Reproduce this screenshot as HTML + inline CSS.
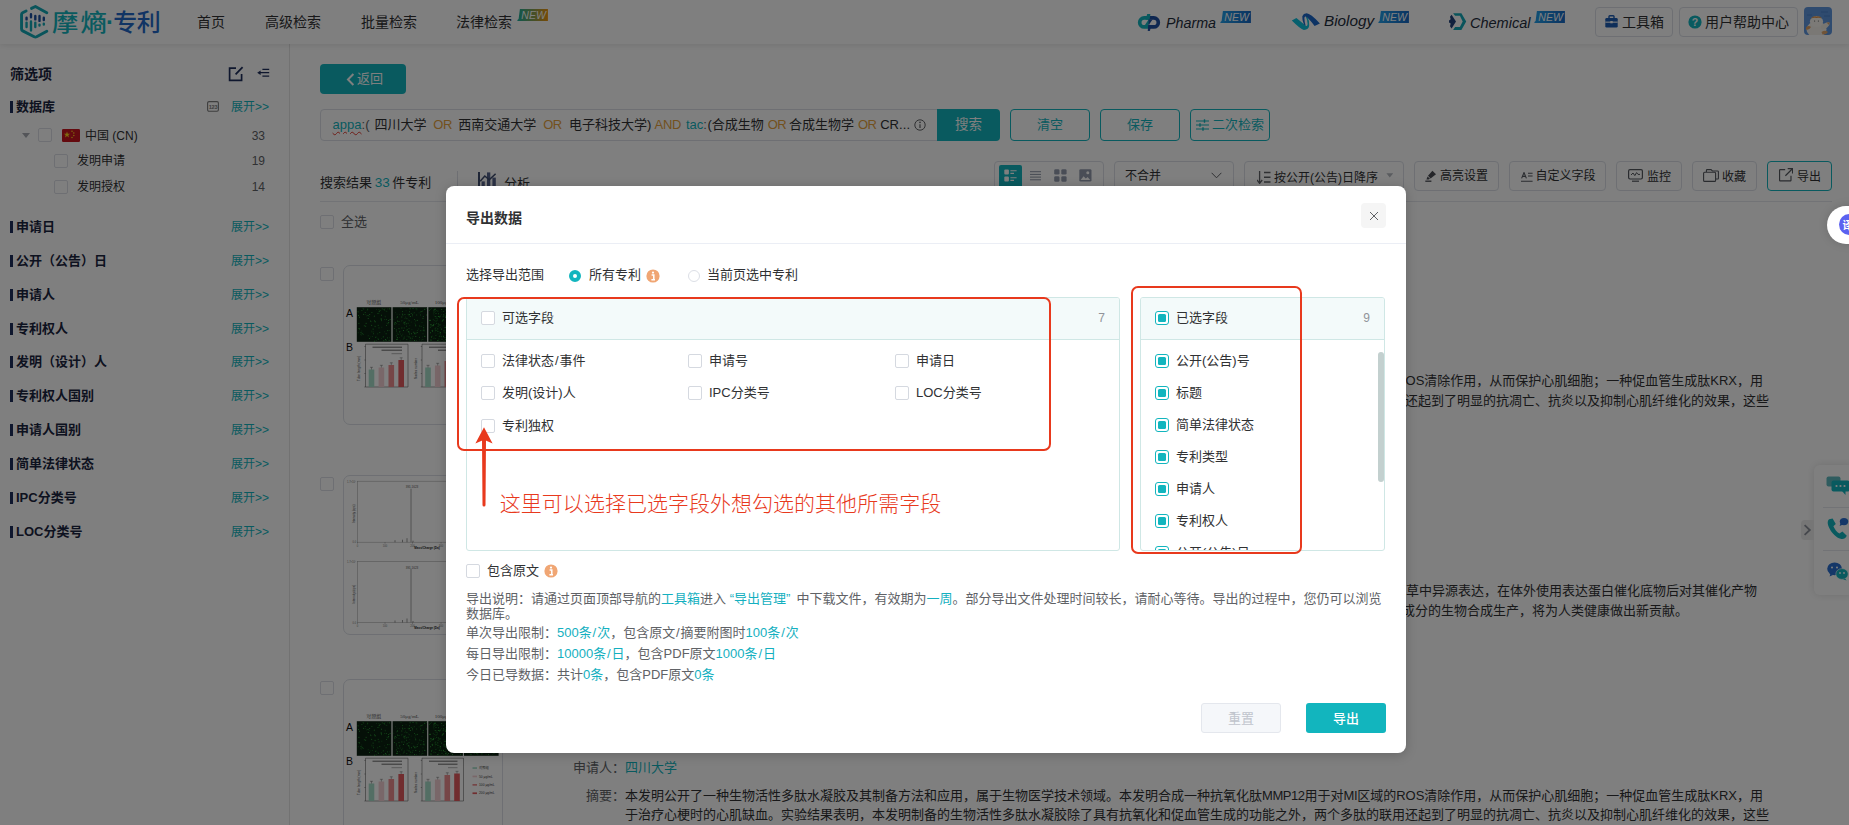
<!DOCTYPE html>
<html lang="zh-CN">
<head>
<meta charset="utf-8">
<title>摩熵·专利 - 导出数据</title>
<style>
*{box-sizing:border-box;margin:0;padding:0}
html,body{width:1849px;height:825px;overflow:hidden;background:#fff}
body{font-family:"Liberation Sans","Noto Sans CJK SC",sans-serif;font-size:13px;color:#303133;position:relative}
.abs{position:absolute;white-space:nowrap}
#page{position:absolute;left:0;top:0;width:1849px;height:825px;overflow:hidden;background:#fff}
/* header */
#hdr{position:absolute;left:0;top:0;width:1849px;height:44px;background:#fff;box-shadow:0 1px 6px rgba(0,0,0,.11);z-index:2}
.nav{position:absolute;top:0;height:44px;line-height:44px;font-size:14px;color:#303133;white-space:nowrap}
.new{position:absolute;height:12px;width:30.5px;margin-left:-.6px;font-size:10.6px;line-height:12.6px;color:#fff;font-style:italic;text-align:center;padding-left:2px;clip-path:polygon(2.5px 0,100% 0,100% 100%,0 100%,0 92%,1.2px 84%)}
.new span{display:inline-block}
.brand{position:absolute;top:1px;height:44px;line-height:44px;font-size:15.5px;font-style:italic;color:#1f2d3d;white-space:nowrap}
.hbtn{position:absolute;top:7px;height:30px;border:1px solid #dcdfe6;border-radius:4px;background:#fff;font-size:14px;line-height:28px;color:#303133;white-space:nowrap}
/* sidebar */
#side{position:absolute;left:0;top:44px;width:290px;height:781px;border-right:1px solid #e4e4e4;background:#fff}
.ft{position:absolute;left:10px;font-size:13px;font-weight:bold;color:#1b2540;height:20px;line-height:20px;white-space:nowrap}
.ft i{position:absolute;left:0;top:4px;width:3px;height:12px;background:#1f2f5c}
.ft span{padding-left:6px}
.ex{position:absolute;left:231px;font-size:12px;color:#12b5be;height:20px;line-height:20px;white-space:nowrap}
.cb{position:absolute;width:14px;height:14px;border:1px solid #dcdfe6;border-radius:2px;background:#fff}
.tl{position:absolute;font-size:12px;color:#303133;height:20px;line-height:20px;white-space:nowrap}
.tn{position:absolute;font-size:12px;color:#606266;height:20px;line-height:20px;width:30px;text-align:right;left:235px}

/* main */
.tbtn{position:absolute;top:161px;height:30px;border:1px solid #dcdfe6;border-radius:4px;background:#fff;font-size:12px;line-height:29px;color:#303133;white-space:nowrap}
.tbtn span{position:absolute;top:0}
.obtn{position:absolute;top:109px;height:32px;width:80px;border:1px solid #12b5be;border-radius:4px;background:#fff;font-size:13px;line-height:30px;color:#12b5be;text-align:center;white-space:nowrap}
.thumb{position:absolute;left:343px;width:160px;height:160px;border:1px solid #dcdfe6;border-radius:7px;background:#fff;overflow:hidden}
.al{position:absolute;left:625px;font-size:13px;line-height:20px;height:20px;color:#303133;white-space:nowrap}
.al u{text-decoration:none;letter-spacing:-.45px}
.lb{position:absolute;font-size:13px;line-height:20px;height:20px;color:#606266;white-space:nowrap}

/* modal */
#ov{position:absolute;left:0;top:0;width:1849px;height:825px;background:rgba(0,0,0,.5);z-index:5}
#md{position:absolute;left:446px;top:186px;width:960px;height:567px;background:#fff;border-radius:8px;z-index:6;box-shadow:0 2px 12px rgba(0,0,0,.2)}
#md .cb{border-color:#d5d9e0}
.mt{position:absolute;font-size:13px;line-height:20px;height:20px;color:#303133;white-space:nowrap}
.pn{position:absolute;top:111px;height:254px;border:1px solid #cfe7e5;border-radius:3px;background:#fff;overflow:hidden}
.pn .hd{position:absolute;left:0;top:0;right:0;height:42px;background:#f3fafa;border-bottom:1px solid #cfe7e5}
.ck{position:absolute;width:14px;height:14px;border:1.5px solid #12b5be;border-radius:3px;background:#fff}
.ck:after{content:"";position:absolute;left:1.5px;top:1.5px;width:8px;height:8px;border-radius:1.5px;background:#12b5be}
.nt{position:absolute;left:20px;font-size:13px;line-height:15px;color:#606266;white-space:nowrap}
.nt b{font-weight:normal;color:#14b0c0}
.sl{margin:0 .9px}
</style>
</head>
<body>
<div id="page">
<div id="hdr">
  <svg class="abs" style="left:19px;top:4px" width="30" height="36" viewBox="0 0 30 36">
    <path d="M12.5 4.4 L16.4 2.5 L27.8 8.7" fill="none" stroke="#12a9b6" stroke-width="2.9" stroke-linecap="round" stroke-linejoin="round"/>
    <path d="M7.1 7 L3.6 8.7 Q2.55 9.3 2.55 10.6 V25 Q2.55 26.3 3.7 26.9 L15.2 32.8 Q16.4 33.4 17.6 32.8 L27.8 27.2" fill="none" stroke="#12a9b6" stroke-width="2.9" stroke-linecap="round" stroke-linejoin="round"/>
    <g stroke-linecap="round" stroke-width="2.4">
      <path d="M7.55 13.8 V15.4 M12 10.2 V13.2 M16.3 11.9 V15.4 M20.5 11.9 V16.9 M24.8 13.8 V16" stroke="#1c4fa0"/>
      <path d="M7.55 18.6 V23 M12 17.4 V26.4 M16.3 18.6 V23 M20.5 20.6 V21.6 M24.8 19.8 V20.6" stroke="#12a9b6"/>
    </g>
  </svg>
  <div class="abs" style="left:52px;top:0;height:44px;line-height:45px;font-size:24px;font-weight:500;letter-spacing:1.8px;color:#12b5be;transform:scaleX(1.1);transform-origin:0 0">摩熵</div>
  <div class="abs" style="left:106px;top:0;height:44px;line-height:43px;font-size:24px;font-weight:900;color:#12b5be;width:8px;text-align:center;overflow:visible"><span style="display:inline-block;margin-left:-8px;width:24px">·</span></div>
  <div class="abs" style="left:113.2px;top:0;height:44px;line-height:45px;font-size:24px;font-weight:500;letter-spacing:-.5px;color:#2268c8">专利</div>
  <div class="nav" style="left:197px">首页</div>
  <div class="nav" style="left:265px">高级检索</div>
  <div class="nav" style="left:361px">批量检索</div>
  <div class="nav" style="left:456px">法律检索</div>
  <div class="new" style="left:518px;top:9px;background:linear-gradient(90deg,#16ae9e,#f0940c)"><span>NEW</span></div>

  <svg class="abs" style="left:1137px;top:13px" width="24" height="19" viewBox="0 0 24 19">
    <path d="M12.6 4.9 H7.2 A4.5 4.5 0 0 0 7.2 13.9 H11.4" fill="none" stroke="#12b5be" stroke-width="3.7"/>
    <path d="M11.4 4.9 H16.8 A4.5 4.5 0 0 1 16.8 13.9 H11.8" fill="none" stroke="#1d4fa3" stroke-width="3.7"/>
    <path d="M10.2 1 H13.4 L12.6 6.8 H8.6 Z" fill="#12b5be"/>
    <path d="M7.6 12.4 L10.8 12.4 L13.2 9.4 L11.6 6.6 Z" fill="#12b5be"/>
    <path d="M11.6 6.6 L15.6 6.6 L12 11.6 L13.6 12.2 L12.8 17.8 H10.8 L11.6 11.8 Z" fill="#1d4fa3"/>
    <path d="M11.2 12 H14.2 L13 17.8 H10.8 Z" fill="#1d4fa3"/>
  </svg>
  <div class="brand" style="left:1166px;font-size:15.2px;transform:scaleX(.94);transform-origin:0 50%">Pharma</div>
  <div class="new" style="left:1221px;top:11px;background:linear-gradient(90deg,#22a0ea,#1668c4)"><span>NEW</span></div>

  <svg class="abs" style="left:1291px;top:12px" width="30" height="19" viewBox="0 0 30 19">
    <path d="M0.8 8.6 L5.4 5.9 L14.8 13.8 Q16.4 14.8 16.6 12 Q16.6 8 15 5.2 L16.2 4.6 Q18.6 9 18.2 13.6 Q17.6 18 12.8 17.9 Q9.5 17.4 0.8 8.6 Z" fill="#0cc0dc"/>
    <path d="M11.3 4.2 Q12.4 1.5 15.6 1.3 Q19.4 1.4 28.9 11.4 L23.6 13.9 Q17.4 5.6 14.6 4.4 Q13.4 4.2 13.4 6.2 Q13.5 10 14.6 13.6 L13 12.8 Q11 8 11.3 4.2 Z" fill="#1a66c8"/>
  </svg>
  <div class="brand" style="left:1324px;top:-1px;font-size:15.3px">Biology</div>
  <div class="new" style="left:1379px;top:11px;background:linear-gradient(90deg,#22a0ea,#1668c4)"><span>NEW</span></div>

  <svg class="abs" style="left:1448px;top:13px" width="19" height="18" viewBox="0 0 19 18">
    <path d="M5.1 .2 H13.4 L18.2 8.5 L13.4 17 H5.1 L7.1 14.1 H11.9 L14.7 8.5 L11.9 2.8 H7.1 Z" fill="#12a9b8"/>
    <path d="M3.6 1.7 L8 8.5 L3.6 15.5 L2 13.3 L2.7 10.6 L1 9.5 V7.4 L2.7 6.3 L2 3.7 Z" fill="#22427c"/>
  </svg>
  <div class="brand" style="left:1469.5px;font-size:15.2px;transform:scaleX(.955);transform-origin:0 50%">Chemical</div>
  <div class="new" style="left:1535px;top:11px;background:linear-gradient(90deg,#22a0ea,#1668c4)"><span>NEW</span></div>

  <div class="hbtn" style="left:1595px;width:78px">
    <svg class="abs" style="left:9px;top:7px" width="13" height="13" viewBox="0 0 13 13"><path d="M4 3 V1.6 A.8.8 0 0 1 4.8.8 H8.2 A.8.8 0 0 1 9 1.6 V3" fill="none" stroke="#1d5cb3" stroke-width="1.4"/><rect x=".3" y="3" width="12.4" height="9.4" rx="1.2" fill="#1d5cb3"/><rect x=".3" y="6.6" width="12.4" height="1.1" fill="#fff"/><rect x="5.3" y="6" width="2.4" height="2.3" fill="#fff"/></svg>
    <span class="abs" style="left:26px;top:0">工具箱</span>
  </div>
  <div class="hbtn" style="left:1679px;width:119px">
    <svg class="abs" style="left:8px;top:7px" width="14" height="14" viewBox="0 0 14 14"><circle cx="7" cy="7" r="6.6" fill="#12b5be"/><text x="7" y="10.8" font-size="10.5" font-weight="bold" fill="#fff" text-anchor="middle" font-family="Liberation Sans, sans-serif">?</text></svg>
    <span class="abs" style="left:25px;top:0">用户帮助中心</span>
  </div>
  <svg class="abs" style="left:1804px;top:7px" width="28" height="28" viewBox="0 0 28 28">
    <defs><clipPath id="avc"><rect width="28" height="28" rx="4"/></clipPath></defs>
    <g clip-path="url(#avc)"><rect width="28" height="28" fill="#5f97df"/>
    <path d="M3 8 H8 M17 5 H24 M20 9 H26" stroke="#4b82cc" stroke-width="1"/>
    <ellipse cx="12.5" cy="22.5" rx="10" ry="8" fill="#f5f1ea"/>
    <ellipse cx="12.5" cy="14.5" rx="6.6" ry="5.4" fill="#f8f5ef"/>
    <path d="M7 11.5 Q9 8.6 12.5 9.4 Q16 8.6 18 11.5 Q15 10.4 12.5 11 Q10 10.4 7 11.5 Z" fill="#e0944a"/>
    <path d="M17 19 Q22 14.5 25.5 15.5 Q26.5 18 22 21.5 Q19 23 17 22 Z" fill="#f1ece3"/>
    <path d="M22.5 15.4 L25.6 15.4 L25 18 Z" fill="#e0a062"/>
    <path d="M2 20.5 Q4.5 18 7 20 Q5 23.5 2 22.5 Z" fill="#e0a062"/>
    <path d="M17.5 25 Q21 22.5 24 25 Q22 28 18.5 27.5 Z" fill="#e3a96e"/>
    <circle cx="10.6" cy="14" r=".6" fill="#555"/><circle cx="14.4" cy="14" r=".6" fill="#555"/></g>
  </svg>
</div>
<div id="side">
  <div class="abs" style="left:10px;top:20px;height:20px;line-height:20px;font-size:14px;font-weight:bold;color:#1b2540">筛选项</div>
  <svg class="abs" style="left:228.2px;top:21.8px" width="17" height="16" viewBox="0 0 17 16"><path d="M8 2.2 H1.6 V14.4 H13.6 V8" fill="none" stroke="#1f2f5c" stroke-width="1.7"/><path d="M7.6 8.4 L14.6 1.2" stroke="#1f2f5c" stroke-width="1.8"/></svg>
  <svg class="abs" style="left:257px;top:24px" width="13" height="10" viewBox="0 0 13 10"><path d="M5.4 1.3 H12.2 M2.4 4.7 H12.2 M5.4 8.1 H12.2" stroke="#1f2f5c" stroke-width="1.25"/><path d="M0.2 4.7 L3.6 2.4 V7 Z" fill="#1f2f5c"/></svg>

  <div class="ft" style="top:52.6px"><i></i><span>数据库</span></div>
  <svg class="abs" style="left:207px;top:57px" width="12" height="11" viewBox="0 0 12 11"><rect x=".6" y=".6" width="10.8" height="9.6" rx="1.4" fill="none" stroke="#7c7c7c" stroke-width="1.1"/><text x="6" y="7.6" font-size="5.6" font-weight="bold" fill="#7c7c7c" text-anchor="middle" font-family="Liberation Sans, sans-serif" letter-spacing="-.2">123</text></svg>
  <div class="ex" style="top:53px">展开&gt;&gt;</div>

  <svg class="abs" style="left:21px;top:88px" width="10" height="7" viewBox="0 0 10 7"><path d="M1 1 H9 L5 6 Z" fill="#a8abb2"/></svg>
  <div class="cb" style="left:38px;top:84px"></div>
  <svg class="abs" style="left:62px;top:85px" width="18" height="13" viewBox="0 0 18 13"><rect width="18" height="13" rx="1.3" fill="#c8141f"/><path d="M5 2.4 L5.8 4.7 L8.2 4.7 L6.3 6.1 L7 8.4 L5 7 L3 8.4 L3.7 6.1 L1.8 4.7 L4.2 4.7 Z" fill="#ffd21a"/><circle cx="10" cy="2.2" r=".75" fill="#ffd21a"/><circle cx="11.8" cy="4" r=".75" fill="#ffd21a"/><circle cx="11.8" cy="6.6" r=".75" fill="#ffd21a"/><circle cx="10" cy="8.6" r=".75" fill="#ffd21a"/></svg>
  <div class="tl" style="left:85px;top:82px">中国 (CN)</div>
  <div class="tn" style="top:82px">33</div>

  <div class="cb" style="left:54px;top:110px"></div>
  <div class="tl" style="left:77px;top:107px">发明申请</div>
  <div class="tn" style="top:107px">19</div>
  <div class="cb" style="left:54px;top:136px"></div>
  <div class="tl" style="left:77px;top:133px">发明授权</div>
  <div class="tn" style="top:133px">14</div>
  <div class="ft" style="top:173px"><i></i><span>申请日</span></div><div class="ex" style="top:173px">展开&gt;&gt;</div>
  <div class="ft" style="top:207px"><i></i><span>公开（公告）日</span></div><div class="ex" style="top:207px">展开&gt;&gt;</div>
  <div class="ft" style="top:241px"><i></i><span>申请人</span></div><div class="ex" style="top:241px">展开&gt;&gt;</div>
  <div class="ft" style="top:275px"><i></i><span>专利权人</span></div><div class="ex" style="top:275px">展开&gt;&gt;</div>
  <div class="ft" style="top:308px"><i></i><span>发明（设计）人</span></div><div class="ex" style="top:308px">展开&gt;&gt;</div>
  <div class="ft" style="top:342px"><i></i><span>专利权人国别</span></div><div class="ex" style="top:342px">展开&gt;&gt;</div>
  <div class="ft" style="top:376px"><i></i><span>申请人国别</span></div><div class="ex" style="top:376px">展开&gt;&gt;</div>
  <div class="ft" style="top:410px"><i></i><span>简单法律状态</span></div><div class="ex" style="top:410px">展开&gt;&gt;</div>
  <div class="ft" style="top:444px"><i></i><span>IPC分类号</span></div><div class="ex" style="top:444px">展开&gt;&gt;</div>
  <div class="ft" style="top:478px"><i></i><span>LOC分类号</span></div><div class="ex" style="top:478px">展开&gt;&gt;</div>
</div>
<div id="main">
  <div class="abs" style="left:320px;top:64px;width:86px;height:30px;border-radius:4px;background:#12b5be;color:#fff;font-size:13px;line-height:30px">
    <svg class="abs" style="left:25.5px;top:8.5px" width="9" height="13" viewBox="0 0 9 13"><path d="M7.4 1 L2 6.5 L7.4 12" fill="none" stroke="#fff" stroke-width="2"/></svg>
    <span class="abs" style="left:37px;top:0">返回</span>
  </div>
  <div class="abs" id="sinput" style="left:320px;top:109px;width:618px;height:32px;border:1px solid #dcdfe6;border-radius:4px 0 0 4px;background:#fff;font-size:13px;line-height:30px;color:#303133"><span class="sg" style="position:absolute;top:0;left:11.6px;white-space:nowrap"><span style="color:#12b5be;text-decoration:underline wavy #e03c31;text-decoration-thickness:1px;text-underline-offset:2px">appa</span><span style="color:#606266">:(</span></span><span class="sg" style="position:absolute;top:0;left:53.4px;white-space:nowrap">四川大学</span><span class="sg" style="position:absolute;top:0;left:112.3px;white-space:nowrap"><span style="color:#e6a23c;letter-spacing:-.5px">OR</span></span><span class="sg" style="position:absolute;top:0;left:137.2px;white-space:nowrap">西南交通大学</span><span class="sg" style="position:absolute;top:0;left:222.2px;white-space:nowrap"><span style="color:#e6a23c;letter-spacing:-.5px">OR</span></span><span class="sg" style="position:absolute;top:0;left:247.9px;white-space:nowrap">电子科技大学)</span><span class="sg" style="position:absolute;top:0;left:333.6px;white-space:nowrap"><span style="color:#e6a23c;letter-spacing:-.3px">AND</span></span><span class="sg" style="position:absolute;top:0;left:365.0px;white-space:nowrap"><span style="color:#12b5be">tac</span><span style="color:#606266">:</span></span><span class="sg" style="position:absolute;top:0;left:386.4px;white-space:nowrap">(合成生物</span><span class="sg" style="position:absolute;top:0;left:446.7px;white-space:nowrap"><span style="color:#e6a23c;letter-spacing:-.5px">OR</span></span><span class="sg" style="position:absolute;top:0;left:468.1px;white-space:nowrap">合成生物学</span><span class="sg" style="position:absolute;top:0;left:537.0px;white-space:nowrap"><span style="color:#e6a23c;letter-spacing:-.5px">OR</span></span><span class="sg" style="position:absolute;top:0;left:559.2px;white-space:nowrap">CR<span style="letter-spacing:.2px;font-family:'Liberation Sans',sans-serif">...</span></span></div>
  <svg class="abs" style="left:914px;top:119px" width="12" height="12" viewBox="0 0 12 12"><circle cx="6" cy="6" r="5.2" fill="none" stroke="#606266" stroke-width="1"/><path d="M6 5.2 V9" stroke="#606266" stroke-width="1.2"/><circle cx="6" cy="3.4" r=".8" fill="#606266"/></svg>
  <div class="abs" style="left:937px;top:109px;width:63px;height:32px;border-radius:0 4px 4px 0;background:#12b5be;color:#fff;font-size:13.5px;line-height:32px;text-align:center">搜索</div>
  <div class="obtn" style="left:1010px">清空</div>
  <div class="obtn" style="left:1100px">保存</div>
  <div class="obtn" style="left:1190px;text-align:left">
    <svg class="abs" style="left:5px;top:9px" width="14" height="12" viewBox="0 0 14 12"><path d="M0 2 H13 M0 6 H13 M0 10 H13" stroke="#12b5be" stroke-width="1.1"/><path d="M8.5 .2 V3.8 M4 4.2 V7.8 M7 8.2 V11.8" stroke="#12b5be" stroke-width="1.4"/></svg>
    <span class="abs" style="left:21px;top:0">二次检索</span>
  </div>

  <div class="abs" style="left:320px;top:173px;height:20px;line-height:20px;font-size:13px;color:#303133"><span style="word-spacing:-1px">搜索结果 <span style="color:#12b5be;font-size:13.5px">33</span> 件专利</span></div>
  <div class="abs" style="left:457px;top:171px;width:1px;height:24px;background:#dcdfe6"></div>
  <svg class="abs" style="left:478px;top:172px" width="18" height="18" viewBox="0 0 18 18"><rect x="0" y="0" width="2" height="18" fill="#3f4d6e"/><rect x="3.6" y="9.4" width="3.2" height="8.6" fill="#55638a"/><rect x="9" y="0.4" width="3.3" height="17.6" fill="#55638a"/><rect x="14.4" y="5.6" width="3.4" height="12.4" fill="#55638a"/><path d="M2.2 9.2 L6.8 4 L11.2 7.8 L17.6 1.8" fill="none" stroke="#3f4d6e" stroke-width="1.5"/></svg>
  <div class="abs" style="left:504px;top:174px;height:20px;line-height:20px;font-size:13px;color:#303133">分析</div>
  <div class="abs" style="left:320px;top:201px;width:1512px;height:1px;background:#e4e7ed"></div>

  <div class="abs" style="left:994px;top:161px;width:110px;height:30px;border:1px solid #dcdfe6;border-radius:4px;background:#fff"></div>
  <div class="abs" style="left:999px;top:165px;width:23px;height:23px;background:#12b5be;border-radius:2px"></div>
  <svg class="abs" style="left:1004px;top:169px" width="14" height="14" viewBox="0 0 14 14"><rect x=".3" y=".4" width="4.6" height="5" rx="1" fill="#fff"/><rect x=".3" y="7.4" width="4.6" height="5" rx="1" fill="#fff"/><path d="M6.4 1.8 H12.6 M6.4 4.4 H10 M6.4 8.8 H12.6 M6.4 11.4 H10" stroke="#fff" stroke-width="1.1"/></svg>
  <svg class="abs" style="left:1030px;top:171px" width="11" height="10" viewBox="0 0 11 10"><path d="M0 .7 H11 M0 3.4 H11 M0 6.1 H11 M0 8.8 H11" stroke="#8d95a5" stroke-width="1"/></svg>
  <svg class="abs" style="left:1054px;top:169px" width="13" height="13" viewBox="0 0 13 13"><rect x=".2" y=".2" width="5.3" height="5.4" rx="1.3" fill="#929bad"/><rect x="7.3" y=".2" width="5.3" height="5.4" rx="1.3" fill="#929bad"/><rect x=".2" y="7.3" width="5.3" height="5.4" rx="1.3" fill="#929bad"/><rect x="7.3" y="7.3" width="5.3" height="5.4" rx="1.3" fill="#929bad"/></svg>
  <svg class="abs" style="left:1079px;top:169px" width="13" height="13" viewBox="0 0 13 13"><rect x=".3" y=".2" width="12.2" height="12.4" rx="1.4" fill="#929bad"/><path d="M1.6 11 L4.6 7.2 L6.8 9.6 L8.6 8 L11.2 11 Z" fill="#fff"/><circle cx="8.8" cy="3.8" r="1.5" fill="#fff"/></svg>

  <div class="tbtn" style="left:1114px;width:120px"><span style="left:10px">不合并</span>
    <svg class="abs" style="left:96px;top:10px" width="11" height="7" viewBox="0 0 11 7"><path d="M.6 .8 L5.5 5.8 L10.4 .8" fill="none" stroke="#606266" stroke-width="1"/></svg></div>
  <div class="tbtn" style="left:1244px;width:160px">
    <svg class="abs" style="left:12px;top:8.5px" width="14" height="13" viewBox="0 0 14 13"><path d="M2.6 0 V12 M0 9 L2.6 12.4 L5.2 9" fill="none" stroke="#606266" stroke-width="1.3"/><path d="M7 1.5 H13.5 M7 6.2 H13.5 M7 11 H13.5" stroke="#606266" stroke-width="1.6"/></svg>
    <span style="left:29px;top:2px">按公开(公告)日降序</span>
    <svg class="abs" style="left:141px;top:10.6px" width="8" height="5" viewBox="0 0 8 5"><path d="M.4 .2 H7.2 L3.8 4.4 Z" fill="#b4b8bf"/></svg></div>
  <div class="tbtn" style="left:1414px;width:85px">
    <svg class="abs" style="left:10px;top:8px" width="12" height="12" viewBox="0 0 12 12"><path d="M5.6 8.4 L3 5.8 L7.4 .8 L11 4.2 Z" fill="#4a4d55"/><path d="M2.6 6.4 L5 8.8 L3.6 9.6 H1.4 Z" fill="#4a4d55"/><path d="M.3 11.2 H6.4" stroke="#4a4d55" stroke-width="1.3"/></svg>
    <span style="left:25px">高亮设置</span></div>
  <div class="tbtn" style="left:1509px;width:97px">
    <svg class="abs" style="left:11px;top:9.6px" width="12" height="10" viewBox="0 0 12 10"><path d="M.6 6.4 L3 .6 L5.4 6.4 M1.5 4.4 H4.5" fill="none" stroke="#55585f" stroke-width="1.1"/><path d="M7 1.2 H11.6 M7 4 H11.6 M0 9.2 H11.6" stroke="#55585f" stroke-width="1.1"/></svg>
    <span style="left:25.5px">自定义字段</span></div>
  <div class="tbtn" style="left:1616px;width:66px">
    <svg class="abs" style="left:11px;top:7px" width="15" height="13" viewBox="0 0 15 13"><rect x=".6" y=".6" width="13.8" height="9.4" rx="1.4" fill="none" stroke="#55585f" stroke-width="1.2"/><path d="M3 6 L5 4 L6.8 6.6 L8.6 3.6 L10 5.4 H12" fill="none" stroke="#55585f" stroke-width="1"/><path d="M4 12.2 H11" stroke="#55585f" stroke-width="1.2"/></svg>
    <span style="left:30px;top:1px">监控</span></div>
  <div class="tbtn" style="left:1692px;width:65px">
    <svg class="abs" style="left:10px;top:7px" width="16" height="13" viewBox="0 0 16 13"><path d="M3.4 3 V1.4 A.8.8 0 0 1 4.2.6 H8 L9.4 2 H14.6 A.8.8 0 0 1 15.4 2.8 V9.2 A.8.8 0 0 1 14.6 10 H12.6" fill="none" stroke="#55585f" stroke-width="1.1"/><rect x=".6" y="3.2" width="12" height="9.2" rx="1" fill="none" stroke="#55585f" stroke-width="1.1"/></svg>
    <span style="left:29px;top:1px">收藏</span></div>
  <div class="tbtn" style="left:1767px;width:65px;border-color:#12b5be;border-width:1.5px">
    <svg class="abs" style="left:10.5px;top:6px" width="14.5" height="14.5" viewBox="0 0 15 15"><path d="M6.4 1.6 H1.4 A.8.8 0 0 0 .6 2.4 V12.6 A.8.8 0 0 0 1.4 13.4 H11.6 A.8.8 0 0 0 12.4 12.6 V8" fill="none" stroke="#55585f" stroke-width="1.2"/><path d="M6.6 8 L13.6 1 M9 .7 H14 V5.6" fill="none" stroke="#55585f" stroke-width="1.2"/></svg>
    <span style="left:29px;top:1px">导出</span></div>

  <div class="cb" style="left:320px;top:215px"></div>
  <div class="abs" style="left:341px;top:212px;height:20px;line-height:20px;font-size:13px;color:#606266">全选</div>

  <div class="cb" style="left:320px;top:267px"></div>
  <div class="thumb" style="top:265px"><svg width="158" height="158" viewBox="0 0 158 158" style="position:absolute;left:0;top:0"><text x="2" y="51" font-size="10.5" fill="#111" font-family="Liberation Sans, sans-serif">A</text><text x="2" y="84.8" font-size="10.5" fill="#111" font-family="Liberation Sans, sans-serif">B</text><rect x="12.8" y="41.2" width="34.6" height="34.6" fill="#0a2110"/><text x="29.8" y="38.4" font-size="5" fill="#555" text-anchor="middle" font-family="Liberation Serif, Noto Serif CJK SC, serif">对照组</text><rect x="21.3" y="59.8" width=".8" height=".8" fill="#3fd04a"/><rect x="43.6" y="57.4" width=".8" height=".8" fill="#2fae3a"/><rect x="33.4" y="71.8" width=".8" height=".8" fill="#1a5f22"/><rect x="22.0" y="49.5" width=".8" height=".8" fill="#1a5f22"/><rect x="31.3" y="59.9" width=".8" height=".8" fill="#1a5f22"/><rect x="34.5" y="46.8" width=".8" height=".8" fill="#1f7a2a"/><rect x="42.0" y="59.1" width=".8" height=".8" fill="#2fae3a"/><rect x="35.6" y="43.9" width=".8" height=".8" fill="#2fae3a"/><rect x="23.3" y="42.8" width=".8" height=".8" fill="#3fd04a"/><rect x="29.0" y="65.5" width=".8" height=".8" fill="#1a5f22"/><rect x="37.0" y="72.2" width=".8" height=".8" fill="#1a5f22"/><rect x="37.4" y="60.8" width=".8" height=".8" fill="#1f7a2a"/><rect x="42.4" y="45.0" width=".8" height=".8" fill="#1f7a2a"/><rect x="29.7" y="50.3" width=".8" height=".8" fill="#1a5f22"/><rect x="39.1" y="70.0" width=".8" height=".8" fill="#1a5f22"/><rect x="30.1" y="54.5" width=".8" height=".8" fill="#3fd04a"/><rect x="31.0" y="55.3" width=".8" height=".8" fill="#1f7a2a"/><rect x="43.2" y="64.3" width=".8" height=".8" fill="#2fae3a"/><rect x="41.7" y="74.5" width=".8" height=".8" fill="#1f7a2a"/><rect x="36.5" y="52.6" width=".8" height=".8" fill="#2fae3a"/><rect x="37.0" y="48.8" width=".8" height=".8" fill="#3fd04a"/><rect x="22.8" y="43.9" width=".8" height=".8" fill="#1a5f22"/><rect x="16.3" y="68.2" width=".8" height=".8" fill="#1a5f22"/><rect x="43.0" y="42.5" width=".8" height=".8" fill="#1a5f22"/><rect x="38.8" y="70.6" width=".8" height=".8" fill="#2fae3a"/><rect x="33.4" y="66.9" width=".8" height=".8" fill="#1a5f22"/><rect x="37.1" y="52.7" width=".8" height=".8" fill="#3fd04a"/><rect x="30.1" y="74.8" width=".8" height=".8" fill="#3fd04a"/><rect x="13.6" y="45.4" width=".8" height=".8" fill="#2fae3a"/><rect x="44.7" y="73.9" width=".8" height=".8" fill="#3fd04a"/><rect x="33.5" y="47.0" width=".8" height=".8" fill="#2fae3a"/><rect x="45.7" y="53.0" width=".8" height=".8" fill="#3fd04a"/><rect x="45.0" y="71.4" width=".8" height=".8" fill="#1a5f22"/><rect x="25.8" y="70.5" width=".8" height=".8" fill="#1a5f22"/><rect x="34.6" y="61.5" width=".8" height=".8" fill="#2fae3a"/><rect x="33.9" y="72.8" width=".8" height=".8" fill="#3fd04a"/><rect x="27.6" y="65.6" width=".8" height=".8" fill="#1f7a2a"/><rect x="44.3" y="56.2" width=".8" height=".8" fill="#3fd04a"/><rect x="30.6" y="59.9" width=".8" height=".8" fill="#2fae3a"/><rect x="39.4" y="74.4" width=".8" height=".8" fill="#3fd04a"/><rect x="14.1" y="62.1" width=".8" height=".8" fill="#1f7a2a"/><rect x="15.4" y="62.5" width=".8" height=".8" fill="#1a5f22"/><rect x="25.0" y="72.1" width=".8" height=".8" fill="#3fd04a"/><rect x="37.8" y="42.5" width=".8" height=".8" fill="#2fae3a"/><rect x="44.9" y="42.5" width=".8" height=".8" fill="#3fd04a"/><rect x="21.7" y="56.9" width=".8" height=".8" fill="#3fd04a"/><rect x="19.3" y="47.9" width=".8" height=".8" fill="#3fd04a"/><rect x="41.2" y="50.5" width=".8" height=".8" fill="#1a5f22"/><rect x="16.9" y="68.6" width=".8" height=".8" fill="#1f7a2a"/><rect x="23.6" y="49.1" width=".8" height=".8" fill="#3fd04a"/><rect x="21.3" y="48.0" width=".8" height=".8" fill="#1a5f22"/><rect x="34.8" y="45.0" width=".8" height=".8" fill="#3fd04a"/><rect x="44.7" y="64.1" width=".8" height=".8" fill="#1f7a2a"/><rect x="27.9" y="70.0" width=".8" height=".8" fill="#1f7a2a"/><rect x="16.0" y="66.3" width=".8" height=".8" fill="#1f7a2a"/><rect x="42.6" y="56.7" width=".8" height=".8" fill="#1f7a2a"/><rect x="39.4" y="42.9" width=".8" height=".8" fill="#1f7a2a"/><rect x="23.8" y="69.4" width=".8" height=".8" fill="#1f7a2a"/><rect x="41.9" y="53.0" width=".8" height=".8" fill="#2fae3a"/><rect x="40.0" y="53.2" width=".8" height=".8" fill="#1f7a2a"/><rect x="27.3" y="58.9" width=".8" height=".8" fill="#3fd04a"/><rect x="28.7" y="62.7" width=".8" height=".8" fill="#3fd04a"/><rect x="27.3" y="55.3" width=".8" height=".8" fill="#1a5f22"/><rect x="18.5" y="42.0" width=".8" height=".8" fill="#1a5f22"/><rect x="31.8" y="74.3" width=".8" height=".8" fill="#1f7a2a"/><rect x="14.5" y="56.9" width=".8" height=".8" fill="#3fd04a"/><rect x="31.3" y="71.2" width=".8" height=".8" fill="#2fae3a"/><rect x="41.7" y="73.8" width=".8" height=".8" fill="#2fae3a"/><rect x="40.1" y="43.3" width=".8" height=".8" fill="#1f7a2a"/><rect x="43.0" y="71.5" width=".8" height=".8" fill="#2fae3a"/><rect x="13.8" y="66.4" width=".8" height=".8" fill="#1f7a2a"/><rect x="30.0" y="49.7" width=".8" height=".8" fill="#2fae3a"/><rect x="30.7" y="55.5" width=".8" height=".8" fill="#2fae3a"/><rect x="24.7" y="50.1" width=".8" height=".8" fill="#1a5f22"/><rect x="40.2" y="43.8" width=".8" height=".8" fill="#1f7a2a"/><rect x="19.9" y="59.4" width=".8" height=".8" fill="#2fae3a"/><rect x="19.1" y="67.9" width=".8" height=".8" fill="#1f7a2a"/><rect x="40.6" y="42.0" width=".8" height=".8" fill="#1a5f22"/><rect x="15.0" y="50.8" width=".8" height=".8" fill="#3fd04a"/><rect x="33.8" y="58.9" width=".8" height=".8" fill="#2fae3a"/><rect x="29.0" y="67.4" width=".8" height=".8" fill="#2fae3a"/><rect x="41.7" y="67.4" width=".8" height=".8" fill="#2fae3a"/><rect x="17.5" y="44.1" width=".8" height=".8" fill="#2fae3a"/><rect x="41.6" y="44.6" width=".8" height=".8" fill="#1a5f22"/><rect x="23.8" y="52.2" width=".8" height=".8" fill="#3fd04a"/><rect x="26.1" y="54.7" width=".8" height=".8" fill="#3fd04a"/><rect x="25.3" y="48.1" width=".8" height=".8" fill="#3fd04a"/><rect x="27.5" y="46.0" width=".8" height=".8" fill="#2fae3a"/><rect x="37.0" y="54.3" width=".8" height=".8" fill="#2fae3a"/><rect x="32.1" y="43.2" width=".8" height=".8" fill="#1a5f22"/><rect x="33.3" y="67.6" width=".8" height=".8" fill="#1a5f22"/><rect x="34.4" y="43.2" width=".8" height=".8" fill="#1a5f22"/><rect x="15.2" y="62.5" width=".8" height=".8" fill="#3fd04a"/><rect x="27.3" y="64.7" width=".8" height=".8" fill="#1a5f22"/><rect x="14.0" y="49.0" width=".8" height=".8" fill="#3fd04a"/><rect x="36.3" y="44.2" width=".8" height=".8" fill="#1a5f22"/><rect x="20.8" y="46.1" width=".8" height=".8" fill="#2fae3a"/><rect x="44.3" y="54.1" width=".8" height=".8" fill="#3fd04a"/><rect x="17.4" y="64.6" width=".8" height=".8" fill="#1a5f22"/><rect x="35.4" y="66.0" width=".8" height=".8" fill="#2fae3a"/><rect x="40.2" y="65.4" width=".8" height=".8" fill="#1a5f22"/><rect x="18.1" y="67.4" width=".8" height=".8" fill="#2fae3a"/><rect x="30.8" y="60.4" width=".8" height=".8" fill="#1a5f22"/><rect x="19.3" y="42.6" width=".8" height=".8" fill="#2fae3a"/><rect x="14.2" y="45.6" width=".8" height=".8" fill="#1a5f22"/><rect x="41.0" y="73.2" width=".8" height=".8" fill="#3fd04a"/><rect x="39.8" y="43.0" width=".8" height=".8" fill="#1f7a2a"/><rect x="16.9" y="66.5" width=".8" height=".8" fill="#2fae3a"/><rect x="31.6" y="70.5" width=".8" height=".8" fill="#1f7a2a"/><rect x="40.7" y="49.8" width=".8" height=".8" fill="#1f7a2a"/><rect x="48.6" y="41.2" width="34.6" height="34.6" fill="#0a2110"/><text x="65.6" y="38.4" font-size="5" fill="#555" text-anchor="middle" font-family="Liberation Serif, Noto Serif CJK SC, serif">50μg/mL</text><rect x="70.5" y="56.8" width=".8" height=".8" fill="#1a5f22"/><rect x="57.5" y="61.6" width=".8" height=".8" fill="#3fd04a"/><rect x="67.6" y="73.7" width=".8" height=".8" fill="#1a5f22"/><rect x="65.7" y="73.9" width=".8" height=".8" fill="#1a5f22"/><rect x="77.0" y="73.7" width=".8" height=".8" fill="#1a5f22"/><rect x="72.0" y="66.8" width=".8" height=".8" fill="#1a5f22"/><rect x="54.4" y="55.0" width=".8" height=".8" fill="#1f7a2a"/><rect x="54.6" y="58.2" width=".8" height=".8" fill="#1a5f22"/><rect x="79.4" y="58.9" width=".8" height=".8" fill="#1a5f22"/><rect x="68.6" y="70.1" width=".8" height=".8" fill="#1f7a2a"/><rect x="58.0" y="48.4" width=".8" height=".8" fill="#3fd04a"/><rect x="80.0" y="69.9" width=".8" height=".8" fill="#3fd04a"/><rect x="71.4" y="70.0" width=".8" height=".8" fill="#3fd04a"/><rect x="78.6" y="51.9" width=".8" height=".8" fill="#3fd04a"/><rect x="65.0" y="54.4" width=".8" height=".8" fill="#1f7a2a"/><rect x="68.0" y="49.7" width=".8" height=".8" fill="#1a5f22"/><rect x="74.7" y="46.5" width=".8" height=".8" fill="#1a5f22"/><rect x="72.3" y="48.6" width=".8" height=".8" fill="#2fae3a"/><rect x="65.1" y="65.6" width=".8" height=".8" fill="#1a5f22"/><rect x="75.0" y="70.9" width=".8" height=".8" fill="#2fae3a"/><rect x="64.6" y="49.4" width=".8" height=".8" fill="#1f7a2a"/><rect x="70.6" y="67.5" width=".8" height=".8" fill="#2fae3a"/><rect x="80.8" y="70.0" width=".8" height=".8" fill="#1f7a2a"/><rect x="78.6" y="67.4" width=".8" height=".8" fill="#1f7a2a"/><rect x="55.4" y="65.1" width=".8" height=".8" fill="#2fae3a"/><rect x="78.9" y="50.2" width=".8" height=".8" fill="#2fae3a"/><rect x="59.5" y="55.8" width=".8" height=".8" fill="#2fae3a"/><rect x="53.1" y="50.5" width=".8" height=".8" fill="#3fd04a"/><rect x="50.4" y="56.7" width=".8" height=".8" fill="#3fd04a"/><rect x="49.4" y="52.8" width=".8" height=".8" fill="#1a5f22"/><rect x="61.7" y="44.4" width=".8" height=".8" fill="#1a5f22"/><rect x="62.1" y="59.8" width=".8" height=".8" fill="#2fae3a"/><rect x="78.4" y="44.3" width=".8" height=".8" fill="#1a5f22"/><rect x="52.9" y="71.1" width=".8" height=".8" fill="#3fd04a"/><rect x="52.4" y="72.9" width=".8" height=".8" fill="#3fd04a"/><rect x="71.6" y="54.0" width=".8" height=".8" fill="#1a5f22"/><rect x="59.0" y="64.1" width=".8" height=".8" fill="#3fd04a"/><rect x="52.7" y="73.0" width=".8" height=".8" fill="#3fd04a"/><rect x="71.4" y="59.5" width=".8" height=".8" fill="#2fae3a"/><rect x="71.2" y="58.6" width=".8" height=".8" fill="#2fae3a"/><rect x="72.9" y="64.2" width=".8" height=".8" fill="#1f7a2a"/><rect x="70.5" y="65.9" width=".8" height=".8" fill="#1f7a2a"/><rect x="55.1" y="71.2" width=".8" height=".8" fill="#1a5f22"/><rect x="53.3" y="72.6" width=".8" height=".8" fill="#1f7a2a"/><rect x="79.6" y="63.1" width=".8" height=".8" fill="#1a5f22"/><rect x="67.5" y="63.2" width=".8" height=".8" fill="#1a5f22"/><rect x="65.1" y="67.6" width=".8" height=".8" fill="#2fae3a"/><rect x="52.7" y="47.8" width=".8" height=".8" fill="#1a5f22"/><rect x="61.1" y="50.6" width=".8" height=".8" fill="#1a5f22"/><rect x="51.0" y="46.3" width=".8" height=".8" fill="#1a5f22"/><rect x="65.9" y="50.0" width=".8" height=".8" fill="#3fd04a"/><rect x="78.1" y="73.0" width=".8" height=".8" fill="#1a5f22"/><rect x="67.1" y="67.3" width=".8" height=".8" fill="#3fd04a"/><rect x="65.6" y="74.7" width=".8" height=".8" fill="#1f7a2a"/><rect x="58.1" y="45.1" width=".8" height=".8" fill="#2fae3a"/><rect x="67.8" y="71.8" width=".8" height=".8" fill="#2fae3a"/><rect x="55.3" y="48.0" width=".8" height=".8" fill="#1a5f22"/><rect x="71.3" y="54.7" width=".8" height=".8" fill="#1f7a2a"/><rect x="68.7" y="46.6" width=".8" height=".8" fill="#1a5f22"/><rect x="75.5" y="59.8" width=".8" height=".8" fill="#1f7a2a"/><rect x="68.0" y="48.5" width=".8" height=".8" fill="#3fd04a"/><rect x="61.4" y="51.5" width=".8" height=".8" fill="#1a5f22"/><rect x="78.6" y="73.1" width=".8" height=".8" fill="#1a5f22"/><rect x="59.6" y="71.7" width=".8" height=".8" fill="#3fd04a"/><rect x="70.1" y="74.0" width=".8" height=".8" fill="#3fd04a"/><rect x="78.8" y="63.8" width=".8" height=".8" fill="#2fae3a"/><rect x="69.0" y="65.8" width=".8" height=".8" fill="#2fae3a"/><rect x="52.7" y="66.7" width=".8" height=".8" fill="#1f7a2a"/><rect x="65.4" y="59.1" width=".8" height=".8" fill="#1a5f22"/><rect x="55.8" y="67.6" width=".8" height=".8" fill="#1f7a2a"/><rect x="50.4" y="58.3" width=".8" height=".8" fill="#1a5f22"/><rect x="52.9" y="51.1" width=".8" height=".8" fill="#1f7a2a"/><rect x="53.7" y="67.9" width=".8" height=".8" fill="#2fae3a"/><rect x="50.0" y="62.2" width=".8" height=".8" fill="#2fae3a"/><rect x="65.7" y="42.4" width=".8" height=".8" fill="#3fd04a"/><rect x="59.9" y="70.5" width=".8" height=".8" fill="#1f7a2a"/><rect x="51.9" y="69.5" width=".8" height=".8" fill="#2fae3a"/><rect x="72.8" y="66.2" width=".8" height=".8" fill="#3fd04a"/><rect x="82.1" y="48.6" width=".8" height=".8" fill="#2fae3a"/><rect x="77.6" y="56.2" width=".8" height=".8" fill="#1f7a2a"/><rect x="65.2" y="45.4" width=".8" height=".8" fill="#2fae3a"/><rect x="62.7" y="69.7" width=".8" height=".8" fill="#1f7a2a"/><rect x="62.1" y="57.4" width=".8" height=".8" fill="#2fae3a"/><rect x="66.9" y="55.7" width=".8" height=".8" fill="#1a5f22"/><rect x="59.3" y="57.1" width=".8" height=".8" fill="#1a5f22"/><rect x="63.7" y="56.8" width=".8" height=".8" fill="#2fae3a"/><rect x="72.9" y="53.9" width=".8" height=".8" fill="#3fd04a"/><rect x="64.0" y="53.7" width=".8" height=".8" fill="#1a5f22"/><rect x="56.6" y="41.9" width=".8" height=".8" fill="#1f7a2a"/><rect x="57.7" y="54.0" width=".8" height=".8" fill="#1a5f22"/><rect x="66.8" y="47.1" width=".8" height=".8" fill="#2fae3a"/><rect x="54.8" y="55.1" width=".8" height=".8" fill="#1f7a2a"/><rect x="70.2" y="46.4" width=".8" height=".8" fill="#1f7a2a"/><rect x="63.8" y="47.9" width=".8" height=".8" fill="#2fae3a"/><rect x="62.5" y="52.3" width=".8" height=".8" fill="#2fae3a"/><rect x="72.4" y="43.5" width=".8" height=".8" fill="#1a5f22"/><rect x="50.5" y="58.1" width=".8" height=".8" fill="#1f7a2a"/><rect x="57.2" y="54.6" width=".8" height=".8" fill="#1f7a2a"/><rect x="54.6" y="62.3" width=".8" height=".8" fill="#3fd04a"/><rect x="79.3" y="61.4" width=".8" height=".8" fill="#3fd04a"/><rect x="58.3" y="67.8" width=".8" height=".8" fill="#1a5f22"/><rect x="75.2" y="73.5" width=".8" height=".8" fill="#1a5f22"/><rect x="57.4" y="50.6" width=".8" height=".8" fill="#3fd04a"/><rect x="70.0" y="53.2" width=".8" height=".8" fill="#2fae3a"/><rect x="51.1" y="56.2" width=".8" height=".8" fill="#2fae3a"/><rect x="68.7" y="41.9" width=".8" height=".8" fill="#2fae3a"/><rect x="71.7" y="42.4" width=".8" height=".8" fill="#2fae3a"/><rect x="65.1" y="48.0" width=".8" height=".8" fill="#3fd04a"/><rect x="55.8" y="73.9" width=".8" height=".8" fill="#1a5f22"/><rect x="60.4" y="57.6" width=".8" height=".8" fill="#3fd04a"/><rect x="80.2" y="42.9" width=".8" height=".8" fill="#3fd04a"/><rect x="74.0" y="62.6" width=".8" height=".8" fill="#1a5f22"/><rect x="52.1" y="51.5" width=".8" height=".8" fill="#1a5f22"/><rect x="53.0" y="54.7" width=".8" height=".8" fill="#3fd04a"/><rect x="66.9" y="67.5" width=".8" height=".8" fill="#1a5f22"/><rect x="55.0" y="66.2" width=".8" height=".8" fill="#1a5f22"/><rect x="76.8" y="60.1" width=".8" height=".8" fill="#1f7a2a"/><rect x="61.2" y="55.5" width=".8" height=".8" fill="#1f7a2a"/><rect x="63.9" y="65.0" width=".8" height=".8" fill="#3fd04a"/><rect x="58.1" y="47.4" width=".8" height=".8" fill="#1a5f22"/><rect x="80.5" y="43.2" width=".8" height=".8" fill="#1f7a2a"/><rect x="72.7" y="42.6" width=".8" height=".8" fill="#1a5f22"/><rect x="52.2" y="64.6" width=".8" height=".8" fill="#2fae3a"/><rect x="59.8" y="61.6" width=".8" height=".8" fill="#2fae3a"/><rect x="78.2" y="70.6" width=".8" height=".8" fill="#1a5f22"/><rect x="64.6" y="70.5" width=".8" height=".8" fill="#3fd04a"/><rect x="82.1" y="41.9" width=".8" height=".8" fill="#1f7a2a"/><rect x="62.4" y="73.3" width=".8" height=".8" fill="#2fae3a"/><rect x="60.4" y="52.1" width=".8" height=".8" fill="#1a5f22"/><rect x="51.9" y="63.2" width=".8" height=".8" fill="#1f7a2a"/><rect x="71.9" y="74.1" width=".8" height=".8" fill="#1f7a2a"/><rect x="68.5" y="42.2" width=".8" height=".8" fill="#1f7a2a"/><rect x="58.7" y="48.7" width=".8" height=".8" fill="#1a5f22"/><rect x="65.9" y="71.7" width=".8" height=".8" fill="#3fd04a"/><rect x="75.2" y="59.5" width=".8" height=".8" fill="#1f7a2a"/><rect x="64.6" y="62.3" width=".8" height=".8" fill="#2fae3a"/><rect x="76.4" y="45.5" width=".8" height=".8" fill="#2fae3a"/><rect x="77.5" y="45.1" width=".8" height=".8" fill="#3fd04a"/><rect x="52.0" y="57.2" width=".8" height=".8" fill="#1f7a2a"/><rect x="76.4" y="64.3" width=".8" height=".8" fill="#2fae3a"/><rect x="70.4" y="66.9" width=".8" height=".8" fill="#3fd04a"/><rect x="62.5" y="63.6" width=".8" height=".8" fill="#2fae3a"/><rect x="58.8" y="73.0" width=".8" height=".8" fill="#1a5f22"/><rect x="76.1" y="48.6" width=".8" height=".8" fill="#2fae3a"/><rect x="64.5" y="65.8" width=".8" height=".8" fill="#2fae3a"/><rect x="60.5" y="48.1" width=".8" height=".8" fill="#2fae3a"/><rect x="79.7" y="64.4" width=".8" height=".8" fill="#3fd04a"/><rect x="63.2" y="63.2" width=".8" height=".8" fill="#1f7a2a"/><rect x="57.4" y="69.5" width=".8" height=".8" fill="#2fae3a"/><rect x="60.3" y="56.0" width=".8" height=".8" fill="#2fae3a"/><rect x="84.3" y="41.2" width="34.6" height="34.6" fill="#0a2110"/><text x="101.3" y="38.4" font-size="5" fill="#555" text-anchor="middle" font-family="Liberation Serif, Noto Serif CJK SC, serif">100μg/mL</text><rect x="93.2" y="52.5" width=".8" height=".8" fill="#1f7a2a"/><rect x="108.9" y="70.7" width=".8" height=".8" fill="#1a5f22"/><rect x="115.6" y="59.5" width=".8" height=".8" fill="#1a5f22"/><rect x="97.0" y="48.1" width=".8" height=".8" fill="#1a5f22"/><rect x="100.9" y="67.3" width=".8" height=".8" fill="#1a5f22"/><rect x="100.4" y="61.2" width=".8" height=".8" fill="#2fae3a"/><rect x="94.5" y="72.6" width=".8" height=".8" fill="#1f7a2a"/><rect x="114.4" y="42.7" width=".8" height=".8" fill="#1f7a2a"/><rect x="94.6" y="58.9" width=".8" height=".8" fill="#1a5f22"/><rect x="86.2" y="66.4" width=".8" height=".8" fill="#3fd04a"/><rect x="101.1" y="43.0" width=".8" height=".8" fill="#1a5f22"/><rect x="109.4" y="66.4" width=".8" height=".8" fill="#3fd04a"/><rect x="89.6" y="56.5" width=".8" height=".8" fill="#1a5f22"/><rect x="99.5" y="48.6" width=".8" height=".8" fill="#1a5f22"/><rect x="110.1" y="64.9" width=".8" height=".8" fill="#1a5f22"/><rect x="117.2" y="70.7" width=".8" height=".8" fill="#3fd04a"/><rect x="116.0" y="56.0" width=".8" height=".8" fill="#1a5f22"/><rect x="100.5" y="74.8" width=".8" height=".8" fill="#1f7a2a"/><rect x="96.8" y="69.9" width=".8" height=".8" fill="#3fd04a"/><rect x="85.9" y="54.1" width=".8" height=".8" fill="#3fd04a"/><rect x="111.5" y="51.6" width=".8" height=".8" fill="#1f7a2a"/><rect x="115.6" y="58.9" width=".8" height=".8" fill="#2fae3a"/><rect x="89.2" y="59.3" width=".8" height=".8" fill="#2fae3a"/><rect x="90.4" y="43.5" width=".8" height=".8" fill="#1f7a2a"/><rect x="117.4" y="68.0" width=".8" height=".8" fill="#3fd04a"/><rect x="117.2" y="67.7" width=".8" height=".8" fill="#2fae3a"/><rect x="101.1" y="49.7" width=".8" height=".8" fill="#3fd04a"/><rect x="99.2" y="53.0" width=".8" height=".8" fill="#2fae3a"/><rect x="104.8" y="68.6" width=".8" height=".8" fill="#1a5f22"/><rect x="95.2" y="50.0" width=".8" height=".8" fill="#1a5f22"/><rect x="98.7" y="50.4" width=".8" height=".8" fill="#2fae3a"/><rect x="85.9" y="43.0" width=".8" height=".8" fill="#1f7a2a"/><rect x="115.0" y="68.5" width=".8" height=".8" fill="#1f7a2a"/><rect x="116.4" y="66.3" width=".8" height=".8" fill="#1a5f22"/><rect x="101.7" y="69.2" width=".8" height=".8" fill="#1f7a2a"/><rect x="94.1" y="47.4" width=".8" height=".8" fill="#2fae3a"/><rect x="100.9" y="43.8" width=".8" height=".8" fill="#1a5f22"/><rect x="100.3" y="63.8" width=".8" height=".8" fill="#1a5f22"/><rect x="97.1" y="62.7" width=".8" height=".8" fill="#3fd04a"/><rect x="90.9" y="64.4" width=".8" height=".8" fill="#2fae3a"/><rect x="98.4" y="53.4" width=".8" height=".8" fill="#1a5f22"/><rect x="94.1" y="50.2" width=".8" height=".8" fill="#3fd04a"/><rect x="116.6" y="46.9" width=".8" height=".8" fill="#3fd04a"/><rect x="89.5" y="43.0" width=".8" height=".8" fill="#1a5f22"/><rect x="113.0" y="69.1" width=".8" height=".8" fill="#3fd04a"/><rect x="85.9" y="60.8" width=".8" height=".8" fill="#2fae3a"/><rect x="101.0" y="51.0" width=".8" height=".8" fill="#3fd04a"/><rect x="88.3" y="63.9" width=".8" height=".8" fill="#3fd04a"/><rect x="86.0" y="57.9" width=".8" height=".8" fill="#1a5f22"/><rect x="91.3" y="72.2" width=".8" height=".8" fill="#1f7a2a"/><rect x="106.5" y="72.9" width=".8" height=".8" fill="#1a5f22"/><rect x="95.3" y="50.7" width=".8" height=".8" fill="#2fae3a"/><rect x="116.0" y="52.3" width=".8" height=".8" fill="#1a5f22"/><rect x="103.2" y="43.0" width=".8" height=".8" fill="#1a5f22"/><rect x="93.2" y="74.1" width=".8" height=".8" fill="#2fae3a"/><rect x="101.2" y="73.4" width=".8" height=".8" fill="#2fae3a"/><rect x="107.9" y="45.6" width=".8" height=".8" fill="#2fae3a"/><rect x="105.7" y="68.8" width=".8" height=".8" fill="#2fae3a"/><rect x="116.0" y="74.0" width=".8" height=".8" fill="#2fae3a"/><rect x="99.1" y="74.3" width=".8" height=".8" fill="#1a5f22"/><rect x="93.7" y="59.8" width=".8" height=".8" fill="#2fae3a"/><rect x="90.7" y="57.9" width=".8" height=".8" fill="#1f7a2a"/><rect x="89.7" y="71.7" width=".8" height=".8" fill="#1f7a2a"/><rect x="107.7" y="57.2" width=".8" height=".8" fill="#1a5f22"/><rect x="106.2" y="46.5" width=".8" height=".8" fill="#2fae3a"/><rect x="90.8" y="62.5" width=".8" height=".8" fill="#3fd04a"/><rect x="91.2" y="68.9" width=".8" height=".8" fill="#1f7a2a"/><rect x="86.5" y="73.5" width=".8" height=".8" fill="#1f7a2a"/><rect x="97.5" y="45.3" width=".8" height=".8" fill="#1a5f22"/><rect x="90.9" y="42.7" width=".8" height=".8" fill="#2fae3a"/><rect x="89.2" y="46.6" width=".8" height=".8" fill="#1f7a2a"/><rect x="97.6" y="72.8" width=".8" height=".8" fill="#2fae3a"/><rect x="115.7" y="42.0" width=".8" height=".8" fill="#3fd04a"/><rect x="117.8" y="74.1" width=".8" height=".8" fill="#1f7a2a"/><rect x="87.0" y="59.8" width=".8" height=".8" fill="#1a5f22"/><rect x="88.3" y="69.7" width=".8" height=".8" fill="#1a5f22"/><rect x="85.6" y="53.2" width=".8" height=".8" fill="#1a5f22"/><rect x="103.7" y="57.1" width=".8" height=".8" fill="#3fd04a"/><rect x="99.5" y="59.4" width=".8" height=".8" fill="#1a5f22"/><rect x="91.5" y="61.4" width=".8" height=".8" fill="#1f7a2a"/><rect x="94.8" y="70.1" width=".8" height=".8" fill="#1f7a2a"/><rect x="95.4" y="69.5" width=".8" height=".8" fill="#1f7a2a"/><rect x="86.7" y="74.1" width=".8" height=".8" fill="#1a5f22"/><rect x="105.2" y="47.7" width=".8" height=".8" fill="#2fae3a"/><rect x="90.1" y="45.8" width=".8" height=".8" fill="#1a5f22"/><rect x="117.6" y="64.4" width=".8" height=".8" fill="#3fd04a"/><rect x="88.0" y="59.6" width=".8" height=".8" fill="#1a5f22"/><rect x="95.7" y="61.3" width=".8" height=".8" fill="#1f7a2a"/><rect x="95.6" y="58.5" width=".8" height=".8" fill="#3fd04a"/><rect x="105.9" y="61.3" width=".8" height=".8" fill="#3fd04a"/><rect x="113.4" y="69.4" width=".8" height=".8" fill="#3fd04a"/><rect x="117.1" y="51.6" width=".8" height=".8" fill="#1f7a2a"/><rect x="89.0" y="58.3" width=".8" height=".8" fill="#3fd04a"/><rect x="109.0" y="50.0" width=".8" height=".8" fill="#1a5f22"/><rect x="116.8" y="56.7" width=".8" height=".8" fill="#1a5f22"/><rect x="95.9" y="67.8" width=".8" height=".8" fill="#1f7a2a"/><rect x="117.5" y="59.2" width=".8" height=".8" fill="#1a5f22"/><rect x="117.7" y="43.5" width=".8" height=".8" fill="#1a5f22"/><rect x="98.9" y="69.8" width=".8" height=".8" fill="#3fd04a"/><rect x="86.9" y="70.0" width=".8" height=".8" fill="#1a5f22"/><rect x="91.9" y="44.3" width=".8" height=".8" fill="#1f7a2a"/><rect x="86.7" y="58.1" width=".8" height=".8" fill="#2fae3a"/><rect x="99.1" y="70.4" width=".8" height=".8" fill="#3fd04a"/><rect x="85.3" y="54.1" width=".8" height=".8" fill="#3fd04a"/><rect x="98.1" y="54.1" width=".8" height=".8" fill="#2fae3a"/><rect x="104.2" y="46.6" width=".8" height=".8" fill="#1f7a2a"/><rect x="84.9" y="43.9" width=".8" height=".8" fill="#2fae3a"/><rect x="89.5" y="44.5" width=".8" height=".8" fill="#3fd04a"/><rect x="99.3" y="48.3" width=".8" height=".8" fill="#2fae3a"/><rect x="102.7" y="72.2" width=".8" height=".8" fill="#1a5f22"/><rect x="109.2" y="69.1" width=".8" height=".8" fill="#1f7a2a"/><rect x="99.5" y="64.3" width=".8" height=".8" fill="#2fae3a"/><rect x="101.7" y="72.4" width=".8" height=".8" fill="#1f7a2a"/><rect x="100.6" y="71.2" width=".8" height=".8" fill="#3fd04a"/><rect x="103.1" y="45.7" width=".8" height=".8" fill="#1f7a2a"/><rect x="104.7" y="44.6" width=".8" height=".8" fill="#2fae3a"/><rect x="111.2" y="54.4" width=".8" height=".8" fill="#1a5f22"/><rect x="112.4" y="47.9" width=".8" height=".8" fill="#3fd04a"/><rect x="89.5" y="48.5" width=".8" height=".8" fill="#1a5f22"/><rect x="104.2" y="73.1" width=".8" height=".8" fill="#3fd04a"/><rect x="99.3" y="45.0" width=".8" height=".8" fill="#2fae3a"/><rect x="87.0" y="70.7" width=".8" height=".8" fill="#3fd04a"/><rect x="87.1" y="42.1" width=".8" height=".8" fill="#1a5f22"/><rect x="115.0" y="62.6" width=".8" height=".8" fill="#2fae3a"/><rect x="112.2" y="52.7" width=".8" height=".8" fill="#1a5f22"/><rect x="114.0" y="49.3" width=".8" height=".8" fill="#3fd04a"/><rect x="91.6" y="54.7" width=".8" height=".8" fill="#2fae3a"/><rect x="86.6" y="58.9" width=".8" height=".8" fill="#1f7a2a"/><rect x="103.8" y="44.6" width=".8" height=".8" fill="#1f7a2a"/><rect x="112.0" y="69.0" width=".8" height=".8" fill="#1a5f22"/><rect x="94.3" y="74.2" width=".8" height=".8" fill="#1f7a2a"/><rect x="91.6" y="51.7" width=".8" height=".8" fill="#1f7a2a"/><rect x="104.1" y="53.8" width=".8" height=".8" fill="#3fd04a"/><rect x="95.3" y="70.2" width=".8" height=".8" fill="#1f7a2a"/><rect x="99.7" y="65.6" width=".8" height=".8" fill="#3fd04a"/><rect x="105.7" y="58.1" width=".8" height=".8" fill="#1f7a2a"/><rect x="91.0" y="45.2" width=".8" height=".8" fill="#1a5f22"/><rect x="88.9" y="71.9" width=".8" height=".8" fill="#1a5f22"/><rect x="112.7" y="52.2" width=".8" height=".8" fill="#2fae3a"/><rect x="95.7" y="49.9" width=".8" height=".8" fill="#2fae3a"/><rect x="92.7" y="53.9" width=".8" height=".8" fill="#1f7a2a"/><rect x="90.8" y="50.1" width=".8" height=".8" fill="#3fd04a"/><rect x="86.6" y="73.7" width=".8" height=".8" fill="#2fae3a"/><rect x="91.8" y="51.8" width=".8" height=".8" fill="#1f7a2a"/><rect x="103.5" y="49.9" width=".8" height=".8" fill="#1f7a2a"/><rect x="92.0" y="63.9" width=".8" height=".8" fill="#1f7a2a"/><rect x="90.7" y="66.6" width=".8" height=".8" fill="#1a5f22"/><rect x="104.6" y="55.8" width=".8" height=".8" fill="#1f7a2a"/><rect x="105.6" y="56.4" width=".8" height=".8" fill="#2fae3a"/><rect x="87.5" y="59.5" width=".8" height=".8" fill="#1a5f22"/><rect x="101.1" y="60.9" width=".8" height=".8" fill="#3fd04a"/><rect x="102.1" y="55.6" width=".8" height=".8" fill="#1a5f22"/><rect x="92.2" y="68.8" width=".8" height=".8" fill="#1a5f22"/><rect x="96.3" y="74.7" width=".8" height=".8" fill="#1a5f22"/><rect x="109.9" y="45.6" width=".8" height=".8" fill="#1a5f22"/><rect x="96.1" y="66.0" width=".8" height=".8" fill="#3fd04a"/><rect x="88.5" y="59.2" width=".8" height=".8" fill="#3fd04a"/><rect x="100.7" y="59.6" width=".8" height=".8" fill="#1a5f22"/><rect x="97.3" y="43.2" width=".8" height=".8" fill="#3fd04a"/><rect x="112.1" y="48.5" width=".8" height=".8" fill="#2fae3a"/><rect x="108.1" y="74.0" width=".8" height=".8" fill="#3fd04a"/><rect x="104.2" y="64.2" width=".8" height=".8" fill="#3fd04a"/><rect x="102.8" y="74.4" width=".8" height=".8" fill="#3fd04a"/><rect x="115.4" y="55.8" width=".8" height=".8" fill="#3fd04a"/><rect x="98.9" y="54.0" width=".8" height=".8" fill="#1f7a2a"/><rect x="93.1" y="64.8" width=".8" height=".8" fill="#1a5f22"/><rect x="108.4" y="52.5" width=".8" height=".8" fill="#1f7a2a"/><rect x="95.4" y="65.7" width=".8" height=".8" fill="#1f7a2a"/><rect x="102.8" y="57.2" width=".8" height=".8" fill="#1a5f22"/><rect x="103.1" y="53.9" width=".8" height=".8" fill="#2fae3a"/><rect x="104.9" y="65.0" width=".8" height=".8" fill="#1f7a2a"/><rect x="101.6" y="47.3" width=".8" height=".8" fill="#2fae3a"/><rect x="103.1" y="45.7" width=".8" height=".8" fill="#1a5f22"/><rect x="113.6" y="58.8" width=".8" height=".8" fill="#1a5f22"/><rect x="93.9" y="57.6" width=".8" height=".8" fill="#3fd04a"/><rect x="92.5" y="50.4" width=".8" height=".8" fill="#1f7a2a"/><rect x="116.2" y="57.5" width=".8" height=".8" fill="#1a5f22"/><rect x="89.8" y="54.0" width=".8" height=".8" fill="#1f7a2a"/><rect x="93.6" y="67.5" width=".8" height=".8" fill="#1f7a2a"/><rect x="106.9" y="49.9" width=".8" height=".8" fill="#3fd04a"/><rect x="111.0" y="66.0" width=".8" height=".8" fill="#2fae3a"/><rect x="88.2" y="65.0" width=".8" height=".8" fill="#2fae3a"/><rect x="92.3" y="56.9" width=".8" height=".8" fill="#2fae3a"/><rect x="95.7" y="67.0" width=".8" height=".8" fill="#1f7a2a"/><rect x="86.3" y="58.0" width=".8" height=".8" fill="#1f7a2a"/><rect x="97.2" y="70.5" width=".8" height=".8" fill="#1a5f22"/><rect x="101.5" y="64.5" width=".8" height=".8" fill="#1a5f22"/><rect x="117.2" y="56.0" width=".8" height=".8" fill="#3fd04a"/><rect x="102.9" y="61.1" width=".8" height=".8" fill="#1a5f22"/><rect x="90.0" y="42.8" width=".8" height=".8" fill="#1a5f22"/><rect x="106.0" y="48.8" width=".8" height=".8" fill="#1f7a2a"/><rect x="101.6" y="73.3" width=".8" height=".8" fill="#3fd04a"/><rect x="93.4" y="62.5" width=".8" height=".8" fill="#3fd04a"/><rect x="91.6" y="47.0" width=".8" height=".8" fill="#2fae3a"/><rect x="100.9" y="66.2" width=".8" height=".8" fill="#1f7a2a"/><rect x="88.8" y="52.9" width=".8" height=".8" fill="#1f7a2a"/><rect x="93.5" y="44.7" width=".8" height=".8" fill="#2fae3a"/><rect x="114.1" y="46.4" width=".8" height=".8" fill="#2fae3a"/><rect x="107.9" y="62.6" width=".8" height=".8" fill="#1a5f22"/><rect x="108.3" y="60.0" width=".8" height=".8" fill="#1a5f22"/><rect x="93.6" y="64.9" width=".8" height=".8" fill="#2fae3a"/><rect x="87.2" y="64.3" width=".8" height=".8" fill="#1a5f22"/><rect x="90.5" y="42.9" width=".8" height=".8" fill="#3fd04a"/><rect x="112.4" y="53.7" width=".8" height=".8" fill="#2fae3a"/><rect x="111.4" y="54.6" width=".8" height=".8" fill="#1a5f22"/><rect x="115.8" y="65.6" width=".8" height=".8" fill="#1f7a2a"/><rect x="99.5" y="49.6" width=".8" height=".8" fill="#2fae3a"/><rect x="96.3" y="49.4" width=".8" height=".8" fill="#1a5f22"/><rect x="97.8" y="54.9" width=".8" height=".8" fill="#2fae3a"/><rect x="102.9" y="61.5" width=".8" height=".8" fill="#3fd04a"/><rect x="120" y="41.2" width="34.6" height="34.6" fill="#0a2110"/><text x="137" y="38.4" font-size="5" fill="#555" text-anchor="middle" font-family="Liberation Serif, Noto Serif CJK SC, serif">200μg/mL</text><rect x="123.8" y="55.2" width=".8" height=".8" fill="#3fd04a"/><rect x="128.0" y="56.8" width=".8" height=".8" fill="#3fd04a"/><rect x="141.7" y="74.3" width=".8" height=".8" fill="#1a5f22"/><rect x="142.5" y="66.1" width=".8" height=".8" fill="#1a5f22"/><rect x="141.6" y="68.2" width=".8" height=".8" fill="#1f7a2a"/><rect x="146.8" y="58.3" width=".8" height=".8" fill="#2fae3a"/><rect x="130.0" y="72.8" width=".8" height=".8" fill="#1f7a2a"/><rect x="135.1" y="46.0" width=".8" height=".8" fill="#1f7a2a"/><rect x="128.1" y="59.2" width=".8" height=".8" fill="#3fd04a"/><rect x="124.6" y="58.3" width=".8" height=".8" fill="#1a5f22"/><rect x="147.1" y="66.2" width=".8" height=".8" fill="#1a5f22"/><rect x="121.3" y="42.6" width=".8" height=".8" fill="#2fae3a"/><rect x="122.5" y="58.6" width=".8" height=".8" fill="#1a5f22"/><rect x="150.5" y="43.4" width=".8" height=".8" fill="#3fd04a"/><rect x="130.7" y="57.4" width=".8" height=".8" fill="#3fd04a"/><rect x="146.3" y="68.3" width=".8" height=".8" fill="#3fd04a"/><rect x="141.2" y="44.7" width=".8" height=".8" fill="#2fae3a"/><rect x="124.4" y="64.3" width=".8" height=".8" fill="#1f7a2a"/><rect x="123.4" y="66.4" width=".8" height=".8" fill="#1f7a2a"/><rect x="141.4" y="44.5" width=".8" height=".8" fill="#3fd04a"/><rect x="137.5" y="73.6" width=".8" height=".8" fill="#2fae3a"/><rect x="137.0" y="53.8" width=".8" height=".8" fill="#1a5f22"/><rect x="151.2" y="55.7" width=".8" height=".8" fill="#3fd04a"/><rect x="139.1" y="54.7" width=".8" height=".8" fill="#1a5f22"/><rect x="131.9" y="72.8" width=".8" height=".8" fill="#3fd04a"/><rect x="130.7" y="66.2" width=".8" height=".8" fill="#3fd04a"/><rect x="146.6" y="66.5" width=".8" height=".8" fill="#1f7a2a"/><rect x="132.4" y="63.3" width=".8" height=".8" fill="#1a5f22"/><rect x="152.2" y="57.5" width=".8" height=".8" fill="#1f7a2a"/><rect x="144.4" y="61.6" width=".8" height=".8" fill="#1f7a2a"/><rect x="153.5" y="43.4" width=".8" height=".8" fill="#1a5f22"/><rect x="128.6" y="47.8" width=".8" height=".8" fill="#2fae3a"/><rect x="142.2" y="71.9" width=".8" height=".8" fill="#1a5f22"/><rect x="129.0" y="71.0" width=".8" height=".8" fill="#3fd04a"/><rect x="133.0" y="68.8" width=".8" height=".8" fill="#3fd04a"/><rect x="144.8" y="66.6" width=".8" height=".8" fill="#3fd04a"/><rect x="150.4" y="54.7" width=".8" height=".8" fill="#1f7a2a"/><rect x="125.2" y="70.8" width=".8" height=".8" fill="#2fae3a"/><rect x="141.8" y="65.8" width=".8" height=".8" fill="#2fae3a"/><rect x="140.5" y="55.0" width=".8" height=".8" fill="#1a5f22"/><rect x="133.1" y="58.4" width=".8" height=".8" fill="#1a5f22"/><rect x="140.8" y="57.5" width=".8" height=".8" fill="#2fae3a"/><rect x="141.9" y="65.4" width=".8" height=".8" fill="#2fae3a"/><rect x="127.0" y="71.2" width=".8" height=".8" fill="#2fae3a"/><rect x="152.9" y="46.4" width=".8" height=".8" fill="#2fae3a"/><rect x="124.6" y="61.4" width=".8" height=".8" fill="#3fd04a"/><rect x="138.7" y="46.0" width=".8" height=".8" fill="#1a5f22"/><rect x="135.0" y="46.6" width=".8" height=".8" fill="#1f7a2a"/><rect x="143.4" y="62.5" width=".8" height=".8" fill="#1a5f22"/><rect x="131.0" y="56.4" width=".8" height=".8" fill="#2fae3a"/><rect x="129.0" y="42.4" width=".8" height=".8" fill="#3fd04a"/><rect x="131.1" y="54.5" width=".8" height=".8" fill="#2fae3a"/><rect x="129.9" y="44.6" width=".8" height=".8" fill="#1a5f22"/><rect x="128.6" y="49.1" width=".8" height=".8" fill="#3fd04a"/><rect x="128.2" y="71.5" width=".8" height=".8" fill="#3fd04a"/><rect x="139.0" y="67.3" width=".8" height=".8" fill="#1f7a2a"/><rect x="139.1" y="54.9" width=".8" height=".8" fill="#3fd04a"/><rect x="147.5" y="49.7" width=".8" height=".8" fill="#1f7a2a"/><rect x="145.5" y="68.9" width=".8" height=".8" fill="#2fae3a"/><rect x="146.7" y="53.1" width=".8" height=".8" fill="#3fd04a"/><rect x="125.7" y="73.8" width=".8" height=".8" fill="#1f7a2a"/><rect x="150.8" y="60.2" width=".8" height=".8" fill="#2fae3a"/><rect x="135.6" y="50.1" width=".8" height=".8" fill="#1a5f22"/><rect x="129.4" y="51.3" width=".8" height=".8" fill="#1f7a2a"/><rect x="135.5" y="48.5" width=".8" height=".8" fill="#3fd04a"/><rect x="142.5" y="45.3" width=".8" height=".8" fill="#1a5f22"/><rect x="144.2" y="68.0" width=".8" height=".8" fill="#1f7a2a"/><rect x="128.9" y="45.9" width=".8" height=".8" fill="#2fae3a"/><rect x="121.4" y="70.6" width=".8" height=".8" fill="#3fd04a"/><rect x="140.4" y="49.2" width=".8" height=".8" fill="#2fae3a"/><rect x="124.4" y="52.2" width=".8" height=".8" fill="#2fae3a"/><rect x="134.0" y="52.8" width=".8" height=".8" fill="#3fd04a"/><rect x="121.3" y="56.4" width=".8" height=".8" fill="#1a5f22"/><rect x="153.5" y="47.4" width=".8" height=".8" fill="#2fae3a"/><rect x="124.6" y="47.4" width=".8" height=".8" fill="#1a5f22"/><rect x="129.8" y="69.8" width=".8" height=".8" fill="#1f7a2a"/><rect x="148.5" y="54.2" width=".8" height=".8" fill="#3fd04a"/><rect x="143.6" y="65.9" width=".8" height=".8" fill="#3fd04a"/><rect x="136.4" y="58.2" width=".8" height=".8" fill="#1a5f22"/><rect x="120.9" y="44.2" width=".8" height=".8" fill="#3fd04a"/><rect x="126.7" y="74.2" width=".8" height=".8" fill="#2fae3a"/><rect x="142.4" y="47.5" width=".8" height=".8" fill="#3fd04a"/><rect x="131.0" y="53.8" width=".8" height=".8" fill="#2fae3a"/><rect x="148.3" y="69.7" width=".8" height=".8" fill="#2fae3a"/><rect x="152.9" y="43.6" width=".8" height=".8" fill="#1a5f22"/><rect x="126.0" y="62.9" width=".8" height=".8" fill="#1a5f22"/><rect x="132.1" y="57.8" width=".8" height=".8" fill="#2fae3a"/><rect x="153.6" y="64.1" width=".8" height=".8" fill="#2fae3a"/><rect x="124.2" y="67.0" width=".8" height=".8" fill="#2fae3a"/><rect x="127.3" y="45.2" width=".8" height=".8" fill="#2fae3a"/><rect x="142.5" y="42.7" width=".8" height=".8" fill="#1f7a2a"/><rect x="122.2" y="56.3" width=".8" height=".8" fill="#2fae3a"/><rect x="137.5" y="72.7" width=".8" height=".8" fill="#1f7a2a"/><rect x="131.4" y="56.5" width=".8" height=".8" fill="#3fd04a"/><rect x="145.9" y="64.8" width=".8" height=".8" fill="#2fae3a"/><rect x="149.0" y="65.0" width=".8" height=".8" fill="#2fae3a"/><rect x="127.8" y="61.2" width=".8" height=".8" fill="#1f7a2a"/><rect x="143.7" y="53.3" width=".8" height=".8" fill="#1a5f22"/><rect x="142.7" y="46.3" width=".8" height=".8" fill="#3fd04a"/><rect x="149.0" y="51.1" width=".8" height=".8" fill="#1f7a2a"/><rect x="145.6" y="59.8" width=".8" height=".8" fill="#3fd04a"/><rect x="135.1" y="54.7" width=".8" height=".8" fill="#3fd04a"/><rect x="130.2" y="53.2" width=".8" height=".8" fill="#1f7a2a"/><rect x="130.4" y="44.2" width=".8" height=".8" fill="#1a5f22"/><rect x="144.7" y="61.4" width=".8" height=".8" fill="#1a5f22"/><rect x="152.5" y="58.6" width=".8" height=".8" fill="#1f7a2a"/><rect x="151.0" y="62.5" width=".8" height=".8" fill="#2fae3a"/><rect x="140.4" y="53.8" width=".8" height=".8" fill="#2fae3a"/><rect x="142.0" y="56.9" width=".8" height=".8" fill="#3fd04a"/><rect x="141.0" y="58.1" width=".8" height=".8" fill="#1a5f22"/><rect x="146.2" y="66.3" width=".8" height=".8" fill="#3fd04a"/><rect x="123.5" y="64.6" width=".8" height=".8" fill="#1a5f22"/><rect x="146.4" y="54.9" width=".8" height=".8" fill="#1f7a2a"/><rect x="127.3" y="50.5" width=".8" height=".8" fill="#1f7a2a"/><rect x="152.3" y="71.7" width=".8" height=".8" fill="#3fd04a"/><rect x="120.6" y="47.7" width=".8" height=".8" fill="#1f7a2a"/><rect x="141.2" y="49.6" width=".8" height=".8" fill="#2fae3a"/><rect x="130.2" y="63.6" width=".8" height=".8" fill="#2fae3a"/><rect x="120.6" y="56.3" width=".8" height=".8" fill="#1a5f22"/><rect x="140.4" y="71.9" width=".8" height=".8" fill="#3fd04a"/><rect x="146.4" y="47.7" width=".8" height=".8" fill="#1a5f22"/><rect x="139.9" y="58.2" width=".8" height=".8" fill="#1a5f22"/><rect x="131.9" y="43.9" width=".8" height=".8" fill="#2fae3a"/><rect x="132.6" y="59.5" width=".8" height=".8" fill="#3fd04a"/><rect x="147.7" y="47.7" width=".8" height=".8" fill="#1a5f22"/><rect x="125.8" y="44.9" width=".8" height=".8" fill="#3fd04a"/><rect x="139.8" y="49.7" width=".8" height=".8" fill="#2fae3a"/><rect x="121.0" y="59.8" width=".8" height=".8" fill="#3fd04a"/><rect x="125.3" y="51.2" width=".8" height=".8" fill="#1f7a2a"/><rect x="132.1" y="67.7" width=".8" height=".8" fill="#3fd04a"/><rect x="139.7" y="46.7" width=".8" height=".8" fill="#1a5f22"/><rect x="142.7" y="55.2" width=".8" height=".8" fill="#1a5f22"/><rect x="151.0" y="69.6" width=".8" height=".8" fill="#2fae3a"/><rect x="152.8" y="50.6" width=".8" height=".8" fill="#3fd04a"/><rect x="132.6" y="42.1" width=".8" height=".8" fill="#2fae3a"/><rect x="134.0" y="43.3" width=".8" height=".8" fill="#1a5f22"/><rect x="145.7" y="64.5" width=".8" height=".8" fill="#1a5f22"/><rect x="122.0" y="50.6" width=".8" height=".8" fill="#3fd04a"/><rect x="126.7" y="71.7" width=".8" height=".8" fill="#3fd04a"/><rect x="149.6" y="66.2" width=".8" height=".8" fill="#1f7a2a"/><rect x="143.6" y="53.6" width=".8" height=".8" fill="#1f7a2a"/><rect x="145.3" y="68.7" width=".8" height=".8" fill="#3fd04a"/><rect x="143.5" y="51.3" width=".8" height=".8" fill="#1f7a2a"/><rect x="128.1" y="70.9" width=".8" height=".8" fill="#2fae3a"/><rect x="128.7" y="47.0" width=".8" height=".8" fill="#3fd04a"/><rect x="127.0" y="60.6" width=".8" height=".8" fill="#1a5f22"/><rect x="152.9" y="66.9" width=".8" height=".8" fill="#1a5f22"/><rect x="149.8" y="47.3" width=".8" height=".8" fill="#1a5f22"/><rect x="148.1" y="74.5" width=".8" height=".8" fill="#1a5f22"/><rect x="123.6" y="54.3" width=".8" height=".8" fill="#2fae3a"/><rect x="127.6" y="66.8" width=".8" height=".8" fill="#3fd04a"/><rect x="147.9" y="53.6" width=".8" height=".8" fill="#3fd04a"/><rect x="148.3" y="64.9" width=".8" height=".8" fill="#1a5f22"/><rect x="141.9" y="67.3" width=".8" height=".8" fill="#1f7a2a"/><rect x="141.8" y="58.9" width=".8" height=".8" fill="#3fd04a"/><rect x="153.1" y="52.4" width=".8" height=".8" fill="#3fd04a"/><rect x="144.6" y="48.2" width=".8" height=".8" fill="#1a5f22"/><rect x="142.1" y="48.8" width=".8" height=".8" fill="#1f7a2a"/><rect x="137.9" y="54.1" width=".8" height=".8" fill="#3fd04a"/><rect x="135.4" y="63.2" width=".8" height=".8" fill="#2fae3a"/><rect x="153.0" y="45.5" width=".8" height=".8" fill="#2fae3a"/><rect x="142.3" y="60.9" width=".8" height=".8" fill="#2fae3a"/><rect x="152.1" y="69.1" width=".8" height=".8" fill="#3fd04a"/><rect x="130.9" y="53.6" width=".8" height=".8" fill="#1f7a2a"/><rect x="129.1" y="72.5" width=".8" height=".8" fill="#1a5f22"/><rect x="146.0" y="64.0" width=".8" height=".8" fill="#3fd04a"/><rect x="137.9" y="47.1" width=".8" height=".8" fill="#1a5f22"/><rect x="123.3" y="68.8" width=".8" height=".8" fill="#2fae3a"/><rect x="153.2" y="64.0" width=".8" height=".8" fill="#2fae3a"/><rect x="139.0" y="56.1" width=".8" height=".8" fill="#2fae3a"/><rect x="141.2" y="52.2" width=".8" height=".8" fill="#3fd04a"/><rect x="132.3" y="71.4" width=".8" height=".8" fill="#1a5f22"/><rect x="148.8" y="57.1" width=".8" height=".8" fill="#1f7a2a"/><rect x="122.9" y="50.2" width=".8" height=".8" fill="#2fae3a"/><rect x="129.3" y="44.1" width=".8" height=".8" fill="#1f7a2a"/><rect x="140.1" y="53.3" width=".8" height=".8" fill="#1f7a2a"/><rect x="139.7" y="62.5" width=".8" height=".8" fill="#3fd04a"/><rect x="149.1" y="43.4" width=".8" height=".8" fill="#2fae3a"/><rect x="152.7" y="41.9" width=".8" height=".8" fill="#1f7a2a"/><rect x="141.2" y="63.4" width=".8" height=".8" fill="#2fae3a"/><rect x="127.2" y="47.4" width=".8" height=".8" fill="#2fae3a"/><rect x="126.2" y="74.1" width=".8" height=".8" fill="#1a5f22"/><rect x="121.4" y="45.2" width=".8" height=".8" fill="#3fd04a"/><rect x="127.4" y="67.7" width=".8" height=".8" fill="#1a5f22"/><rect x="146.4" y="45.4" width=".8" height=".8" fill="#2fae3a"/><rect x="143.8" y="60.3" width=".8" height=".8" fill="#3fd04a"/><rect x="142.8" y="69.8" width=".8" height=".8" fill="#1f7a2a"/><rect x="135.3" y="44.7" width=".8" height=".8" fill="#3fd04a"/><rect x="123.0" y="57.8" width=".8" height=".8" fill="#1f7a2a"/><rect x="125.3" y="49.2" width=".8" height=".8" fill="#1a5f22"/><rect x="129.8" y="71.1" width=".8" height=".8" fill="#2fae3a"/><rect x="149.8" y="49.4" width=".8" height=".8" fill="#3fd04a"/><rect x="147.7" y="53.5" width=".8" height=".8" fill="#2fae3a"/><rect x="141.7" y="47.1" width=".8" height=".8" fill="#2fae3a"/><rect x="135.4" y="67.2" width=".8" height=".8" fill="#1f7a2a"/><rect x="149.6" y="70.1" width=".8" height=".8" fill="#1f7a2a"/><rect x="138.9" y="70.7" width=".8" height=".8" fill="#1f7a2a"/><rect x="139.0" y="55.8" width=".8" height=".8" fill="#2fae3a"/><rect x="130.3" y="56.3" width=".8" height=".8" fill="#1a5f22"/><rect x="128.4" y="55.2" width=".8" height=".8" fill="#1f7a2a"/><rect x="128.1" y="71.0" width=".8" height=".8" fill="#3fd04a"/><rect x="123.8" y="57.3" width=".8" height=".8" fill="#1a5f22"/><rect x="121.5" y="54.5" width=".8" height=".8" fill="#1f7a2a"/><rect x="138.6" y="70.4" width=".8" height=".8" fill="#1f7a2a"/><rect x="123.5" y="72.4" width=".8" height=".8" fill="#2fae3a"/><rect x="147.4" y="47.6" width=".8" height=".8" fill="#3fd04a"/><rect x="147.6" y="68.8" width=".8" height=".8" fill="#3fd04a"/><rect x="136.1" y="64.9" width=".8" height=".8" fill="#3fd04a"/><rect x="123.1" y="71.7" width=".8" height=".8" fill="#3fd04a"/><rect x="140.1" y="43.8" width=".8" height=".8" fill="#3fd04a"/><rect x="131.0" y="44.0" width=".8" height=".8" fill="#3fd04a"/><rect x="124.5" y="70.2" width=".8" height=".8" fill="#1a5f22"/><rect x="141.4" y="70.0" width=".8" height=".8" fill="#1a5f22"/><rect x="144.2" y="54.5" width=".8" height=".8" fill="#3fd04a"/><rect x="131.9" y="69.7" width=".8" height=".8" fill="#3fd04a"/><rect x="127.3" y="66.2" width=".8" height=".8" fill="#3fd04a"/><rect x="146.4" y="51.7" width=".8" height=".8" fill="#1a5f22"/><rect x="125.7" y="50.3" width=".8" height=".8" fill="#1f7a2a"/><rect x="136.8" y="58.6" width=".8" height=".8" fill="#2fae3a"/><rect x="133.4" y="73.5" width=".8" height=".8" fill="#3fd04a"/><rect x="143.1" y="48.2" width=".8" height=".8" fill="#1a5f22"/><rect x="135.9" y="63.6" width=".8" height=".8" fill="#3fd04a"/><rect x="146.8" y="68.6" width=".8" height=".8" fill="#1f7a2a"/><rect x="125.7" y="64.4" width=".8" height=".8" fill="#2fae3a"/><rect x="128.6" y="58.5" width=".8" height=".8" fill="#1a5f22"/><rect x="132.9" y="65.1" width=".8" height=".8" fill="#1a5f22"/><rect x="145.1" y="58.7" width=".8" height=".8" fill="#3fd04a"/><rect x="153.1" y="59.4" width=".8" height=".8" fill="#3fd04a"/><rect x="123.2" y="69.0" width=".8" height=".8" fill="#3fd04a"/><rect x="149.6" y="44.4" width=".8" height=".8" fill="#1a5f22"/><rect x="140.7" y="50.4" width=".8" height=".8" fill="#1a5f22"/><rect x="130.4" y="74.8" width=".8" height=".8" fill="#1a5f22"/><rect x="148.2" y="65.3" width=".8" height=".8" fill="#1a5f22"/><rect x="126.0" y="45.4" width=".8" height=".8" fill="#1a5f22"/><rect x="144.2" y="48.8" width=".8" height=".8" fill="#1a5f22"/><rect x="130.4" y="66.1" width=".8" height=".8" fill="#3fd04a"/><rect x="143.0" y="51.4" width=".8" height=".8" fill="#1f7a2a"/><rect x="140.1" y="48.0" width=".8" height=".8" fill="#2fae3a"/><rect x="122.0" y="55.4" width=".8" height=".8" fill="#1a5f22"/><rect x="140.8" y="54.2" width=".8" height=".8" fill="#1a5f22"/><rect x="146.5" y="46.9" width=".8" height=".8" fill="#2fae3a"/><rect x="133.0" y="70.5" width=".8" height=".8" fill="#1a5f22"/><rect x="124.1" y="47.7" width=".8" height=".8" fill="#1f7a2a"/><rect x="141.9" y="45.5" width=".8" height=".8" fill="#3fd04a"/><rect x="150.6" y="71.8" width=".8" height=".8" fill="#3fd04a"/><rect x="141.2" y="52.0" width=".8" height=".8" fill="#2fae3a"/><rect x="142.0" y="61.2" width=".8" height=".8" fill="#1a5f22"/><rect x="131.5" y="41.9" width=".8" height=".8" fill="#1a5f22"/><rect x="144.1" y="74.1" width=".8" height=".8" fill="#2fae3a"/><rect x="149.6" y="72.9" width=".8" height=".8" fill="#2fae3a"/><rect x="123.3" y="68.8" width=".8" height=".8" fill="#1a5f22"/><rect x="122.9" y="62.6" width=".8" height=".8" fill="#2fae3a"/><rect x="133.0" y="42.4" width=".8" height=".8" fill="#1a5f22"/><rect x="151.1" y="71.4" width=".8" height=".8" fill="#1f7a2a"/><rect x="142.6" y="50.0" width=".8" height=".8" fill="#1a5f22"/><rect x="145.6" y="44.9" width=".8" height=".8" fill="#2fae3a"/><rect x="149.2" y="50.0" width=".8" height=".8" fill="#2fae3a"/><rect x="128.8" y="52.5" width=".8" height=".8" fill="#1a5f22"/><rect x="146.6" y="43.3" width=".8" height=".8" fill="#1f7a2a"/><rect x="151.9" y="53.0" width=".8" height=".8" fill="#1a5f22"/><path d="M21.5 78.2 V121 H64.0 V78.2 Z" fill="none" stroke="#444" stroke-width=".5"/><rect x="24.7" y="103.5" width="5.6" height="17.5" fill="#a6dcc8"/><path d="M27.5 103.5 V101.3 M26.0 101.3 H29.0" stroke="#444" stroke-width=".4"/><rect x="34.6" y="101.5" width="5.6" height="19.5" fill="#f3ced2"/><path d="M37.4 101.5 V99.3 M35.9 99.3 H38.9" stroke="#444" stroke-width=".4"/><rect x="44.5" y="99" width="5.6" height="22.0" fill="#ec8c8f"/><path d="M47.3 99 V96.8 M45.8 96.8 H48.8" stroke="#444" stroke-width=".4"/><rect x="54.4" y="94" width="5.6" height="27.0" fill="#e25a5e"/><path d="M57.2 94 V91.8 M55.7 91.8 H58.7" stroke="#444" stroke-width=".4"/><path d="M28.5 81.2 H58.0 M37.5 84.2 H58.0" stroke="#222" stroke-width=".7"/><path d="M47.5 87.7 H58.0" stroke="#666" stroke-width=".5"/><path d="M20.3 121.0 H21.5" stroke="#333" stroke-width=".4"/><path d="M20.3 107.5 H21.5" stroke="#333" stroke-width=".4"/><path d="M20.3 94.0 H21.5" stroke="#333" stroke-width=".4"/><path d="M20.3 80.5 H21.5" stroke="#333" stroke-width=".4"/><path d="M78 78.2 V121 H119.5 V78.2 Z" fill="none" stroke="#444" stroke-width=".5"/><rect x="81.2" y="101.5" width="5.6" height="19.5" fill="#a6dcc8"/><path d="M84.0 101.5 V99.3 M82.5 99.3 H85.5" stroke="#444" stroke-width=".4"/><rect x="90.9" y="99.5" width="5.6" height="21.5" fill="#f3ced2"/><path d="M93.7 99.5 V97.3 M92.2 97.3 H95.2" stroke="#444" stroke-width=".4"/><rect x="100.5" y="95" width="5.6" height="26.0" fill="#ec8c8f"/><path d="M103.3 95 V92.8 M101.8 92.8 H104.8" stroke="#444" stroke-width=".4"/><rect x="110.2" y="93.5" width="5.6" height="27.5" fill="#e25a5e"/><path d="M113.0 93.5 V91.3 M111.5 91.3 H114.5" stroke="#444" stroke-width=".4"/><path d="M85 81.2 H113.5 M94 84.2 H113.5" stroke="#222" stroke-width=".7"/><path d="M104 87.7 H113.5" stroke="#666" stroke-width=".5"/><path d="M76.8 121.0 H78" stroke="#333" stroke-width=".4"/><path d="M76.8 107.5 H78" stroke="#333" stroke-width=".4"/><path d="M76.8 94.0 H78" stroke="#333" stroke-width=".4"/><path d="M76.8 80.5 H78" stroke="#333" stroke-width=".4"/><text transform="translate(16 115) rotate(-90)" font-size="3.2" fill="#333" font-family="Liberation Sans, sans-serif">Tube length (mm)</text><text transform="translate(72.5 113) rotate(-90)" font-size="3.2" fill="#333" font-family="Liberation Sans, sans-serif">Nodes number</text><rect x="128.5" y="87.2" width="4.5" height="1.7" fill="#a6dcc8"/><text x="135" y="89.2" font-size="3.3" fill="#444" font-family="Liberation Sans, Noto Sans CJK SC, sans-serif">对照组</text><rect x="128.5" y="95.6" width="4.5" height="1.7" fill="#f3ced2"/><text x="135" y="97.6" font-size="3.3" fill="#444" font-family="Liberation Sans, Noto Sans CJK SC, sans-serif">50 μg/mL</text><rect x="128.5" y="104.0" width="4.5" height="1.7" fill="#ec8c8f"/><text x="135" y="106.0" font-size="3.3" fill="#444" font-family="Liberation Sans, Noto Sans CJK SC, sans-serif">100 μg/mL</text><rect x="128.5" y="112.4" width="4.5" height="1.7" fill="#e25a5e"/><text x="135" y="114.4" font-size="3.3" fill="#444" font-family="Liberation Sans, Noto Sans CJK SC, sans-serif">200 μg/mL</text></svg></div>
  <div class="al" style="top:371px">本发明公开了一种生物活性多肽水凝胶及其制备方法和应用，属于生物医学技术领域。本发明合成一种抗氧化肽<u>MMP12</u>用于对<u>MI</u>区域的ROS清除作用，从而保护心肌细胞；一种促血管生成肽KRX，用</div>
  <div class="al" style="top:391px">于治疗心梗时的心肌缺血。实验结果表明，本发明制备的生物活性多肽水凝胶除了具有抗氧化和促血管生成的功能之外，两个多肽的联用还起到了明显的抗凋亡、抗炎以及抑制心肌纤维化的效果，这些</div>

  <div class="cb" style="left:320px;top:477px"></div>
  <div class="thumb" style="top:475px"><svg width="158" height="158" viewBox="0 0 158 158" style="position:absolute;left:0;top:0"><rect x="13.5" y="5.2" width="141" height="61" fill="none" stroke="#a4a4a4" stroke-width=".55"/><path d="M67 12.7 V66.2" stroke="#9a9a9a" stroke-width=".9"/><path d="M51 64.2 V66.2 M58.5 63.7 V66.2 M63 62.2 V66.2 M69 64.7 V66.2" stroke="#555" stroke-width=".6"/><text x="68" y="12.2" font-size="3" fill="#555" text-anchor="middle" font-family="Liberation Sans, sans-serif">391.1623</text><text x="3" y="6.7" font-size="2.6" fill="#777" font-family="Liberation Sans, sans-serif">1.7×10⁵</text><text x="8.5" y="67.2" font-size="2.6" fill="#777" font-family="Liberation Sans, sans-serif">0.0</text><path d="M13.5 66.2 V67.5" stroke="#777" stroke-width=".5"/><text x="13.5" y="70.8" font-size="2.6" fill="#777" text-anchor="middle" font-family="Liberation Sans, sans-serif">0</text><path d="M41 66.2 V67.5" stroke="#777" stroke-width=".5"/><text x="41" y="70.8" font-size="2.6" fill="#777" text-anchor="middle" font-family="Liberation Sans, sans-serif">100</text><path d="M68.5 66.2 V67.5" stroke="#777" stroke-width=".5"/><text x="68.5" y="70.8" font-size="2.6" fill="#777" text-anchor="middle" font-family="Liberation Sans, sans-serif">200</text><path d="M97 66.2 V67.5" stroke="#777" stroke-width=".5"/><text x="97" y="70.8" font-size="2.6" fill="#777" text-anchor="middle" font-family="Liberation Sans, sans-serif">300</text><path d="M125 66.2 V67.5" stroke="#777" stroke-width=".5"/><text x="125" y="70.8" font-size="2.6" fill="#777" text-anchor="middle" font-family="Liberation Sans, sans-serif">400</text><path d="M153 66.2 V67.5" stroke="#777" stroke-width=".5"/><text x="153" y="70.8" font-size="2.6" fill="#777" text-anchor="middle" font-family="Liberation Sans, sans-serif">500</text><text x="83" y="72.8" font-size="3" fill="#222" text-anchor="middle" font-weight="bold" font-family="Liberation Sans, sans-serif">Mass/Charge (Da)</text><text transform="translate(11 47.2) rotate(-90)" font-size="3" fill="#444" font-family="Liberation Sans, sans-serif">Intensity (cps)</text><rect x="13.5" y="85.5" width="141" height="61" fill="none" stroke="#a4a4a4" stroke-width=".55"/><path d="M67 93.0 V146.5" stroke="#9a9a9a" stroke-width=".9"/><path d="M51 144.5 V146.5 M58.5 144.0 V146.5 M63 142.5 V146.5 M69 145.0 V146.5" stroke="#555" stroke-width=".6"/><text x="68" y="92.5" font-size="3" fill="#555" text-anchor="middle" font-family="Liberation Sans, sans-serif">391.1623</text><text x="3" y="87.0" font-size="2.6" fill="#777" font-family="Liberation Sans, sans-serif">1.7×10⁵</text><text x="8.5" y="147.5" font-size="2.6" fill="#777" font-family="Liberation Sans, sans-serif">0.0</text><path d="M13.5 146.5 V147.8" stroke="#777" stroke-width=".5"/><text x="13.5" y="151.1" font-size="2.6" fill="#777" text-anchor="middle" font-family="Liberation Sans, sans-serif">0</text><path d="M41 146.5 V147.8" stroke="#777" stroke-width=".5"/><text x="41" y="151.1" font-size="2.6" fill="#777" text-anchor="middle" font-family="Liberation Sans, sans-serif">100</text><path d="M68.5 146.5 V147.8" stroke="#777" stroke-width=".5"/><text x="68.5" y="151.1" font-size="2.6" fill="#777" text-anchor="middle" font-family="Liberation Sans, sans-serif">200</text><path d="M97 146.5 V147.8" stroke="#777" stroke-width=".5"/><text x="97" y="151.1" font-size="2.6" fill="#777" text-anchor="middle" font-family="Liberation Sans, sans-serif">300</text><path d="M125 146.5 V147.8" stroke="#777" stroke-width=".5"/><text x="125" y="151.1" font-size="2.6" fill="#777" text-anchor="middle" font-family="Liberation Sans, sans-serif">400</text><path d="M153 146.5 V147.8" stroke="#777" stroke-width=".5"/><text x="153" y="151.1" font-size="2.6" fill="#777" text-anchor="middle" font-family="Liberation Sans, sans-serif">500</text><text x="83" y="153.1" font-size="3" fill="#222" text-anchor="middle" font-weight="bold" font-family="Liberation Sans, sans-serif">Mass/Charge (Da)</text><text transform="translate(11 127.5) rotate(-90)" font-size="3" fill="#444" font-family="Liberation Sans, sans-serif">Intensity (cps)</text></svg></div>
  <div class="al" style="top:581px;left:auto;right:92px">本发明公开了一种黄酮糖基转移酶及其编码基因与应用，属于合成生物学技术领域。本发明将该糖基转移酶基因在大肠杆菌及烟草中异源表达，在体外使用表达蛋白催化底物后对其催化产物</div>
  <div class="al" style="top:601px;left:auto;right:161px">进行检测，证明其具有黄酮糖基转移酶活性。本发明为黄酮糖苷类化合物的合成生物学研究提供了新的基因元件，可用于中药活性成分的生物合成生产，将为人类健康做出新贡献。</div>

  <div class="cb" style="left:320px;top:681px"></div>
  <div class="thumb" style="top:679px"><svg width="158" height="158" viewBox="0 0 158 158" style="position:absolute;left:0;top:0"><text x="2" y="51" font-size="10.5" fill="#111" font-family="Liberation Sans, sans-serif">A</text><text x="2" y="84.8" font-size="10.5" fill="#111" font-family="Liberation Sans, sans-serif">B</text><rect x="12.8" y="41.2" width="34.6" height="34.6" fill="#0a2110"/><text x="29.8" y="38.4" font-size="5" fill="#555" text-anchor="middle" font-family="Liberation Serif, Noto Serif CJK SC, serif">对照组</text><rect x="21.3" y="59.8" width=".8" height=".8" fill="#3fd04a"/><rect x="43.6" y="57.4" width=".8" height=".8" fill="#2fae3a"/><rect x="33.4" y="71.8" width=".8" height=".8" fill="#1a5f22"/><rect x="22.0" y="49.5" width=".8" height=".8" fill="#1a5f22"/><rect x="31.3" y="59.9" width=".8" height=".8" fill="#1a5f22"/><rect x="34.5" y="46.8" width=".8" height=".8" fill="#1f7a2a"/><rect x="42.0" y="59.1" width=".8" height=".8" fill="#2fae3a"/><rect x="35.6" y="43.9" width=".8" height=".8" fill="#2fae3a"/><rect x="23.3" y="42.8" width=".8" height=".8" fill="#3fd04a"/><rect x="29.0" y="65.5" width=".8" height=".8" fill="#1a5f22"/><rect x="37.0" y="72.2" width=".8" height=".8" fill="#1a5f22"/><rect x="37.4" y="60.8" width=".8" height=".8" fill="#1f7a2a"/><rect x="42.4" y="45.0" width=".8" height=".8" fill="#1f7a2a"/><rect x="29.7" y="50.3" width=".8" height=".8" fill="#1a5f22"/><rect x="39.1" y="70.0" width=".8" height=".8" fill="#1a5f22"/><rect x="30.1" y="54.5" width=".8" height=".8" fill="#3fd04a"/><rect x="31.0" y="55.3" width=".8" height=".8" fill="#1f7a2a"/><rect x="43.2" y="64.3" width=".8" height=".8" fill="#2fae3a"/><rect x="41.7" y="74.5" width=".8" height=".8" fill="#1f7a2a"/><rect x="36.5" y="52.6" width=".8" height=".8" fill="#2fae3a"/><rect x="37.0" y="48.8" width=".8" height=".8" fill="#3fd04a"/><rect x="22.8" y="43.9" width=".8" height=".8" fill="#1a5f22"/><rect x="16.3" y="68.2" width=".8" height=".8" fill="#1a5f22"/><rect x="43.0" y="42.5" width=".8" height=".8" fill="#1a5f22"/><rect x="38.8" y="70.6" width=".8" height=".8" fill="#2fae3a"/><rect x="33.4" y="66.9" width=".8" height=".8" fill="#1a5f22"/><rect x="37.1" y="52.7" width=".8" height=".8" fill="#3fd04a"/><rect x="30.1" y="74.8" width=".8" height=".8" fill="#3fd04a"/><rect x="13.6" y="45.4" width=".8" height=".8" fill="#2fae3a"/><rect x="44.7" y="73.9" width=".8" height=".8" fill="#3fd04a"/><rect x="33.5" y="47.0" width=".8" height=".8" fill="#2fae3a"/><rect x="45.7" y="53.0" width=".8" height=".8" fill="#3fd04a"/><rect x="45.0" y="71.4" width=".8" height=".8" fill="#1a5f22"/><rect x="25.8" y="70.5" width=".8" height=".8" fill="#1a5f22"/><rect x="34.6" y="61.5" width=".8" height=".8" fill="#2fae3a"/><rect x="33.9" y="72.8" width=".8" height=".8" fill="#3fd04a"/><rect x="27.6" y="65.6" width=".8" height=".8" fill="#1f7a2a"/><rect x="44.3" y="56.2" width=".8" height=".8" fill="#3fd04a"/><rect x="30.6" y="59.9" width=".8" height=".8" fill="#2fae3a"/><rect x="39.4" y="74.4" width=".8" height=".8" fill="#3fd04a"/><rect x="14.1" y="62.1" width=".8" height=".8" fill="#1f7a2a"/><rect x="15.4" y="62.5" width=".8" height=".8" fill="#1a5f22"/><rect x="25.0" y="72.1" width=".8" height=".8" fill="#3fd04a"/><rect x="37.8" y="42.5" width=".8" height=".8" fill="#2fae3a"/><rect x="44.9" y="42.5" width=".8" height=".8" fill="#3fd04a"/><rect x="21.7" y="56.9" width=".8" height=".8" fill="#3fd04a"/><rect x="19.3" y="47.9" width=".8" height=".8" fill="#3fd04a"/><rect x="41.2" y="50.5" width=".8" height=".8" fill="#1a5f22"/><rect x="16.9" y="68.6" width=".8" height=".8" fill="#1f7a2a"/><rect x="23.6" y="49.1" width=".8" height=".8" fill="#3fd04a"/><rect x="21.3" y="48.0" width=".8" height=".8" fill="#1a5f22"/><rect x="34.8" y="45.0" width=".8" height=".8" fill="#3fd04a"/><rect x="44.7" y="64.1" width=".8" height=".8" fill="#1f7a2a"/><rect x="27.9" y="70.0" width=".8" height=".8" fill="#1f7a2a"/><rect x="16.0" y="66.3" width=".8" height=".8" fill="#1f7a2a"/><rect x="42.6" y="56.7" width=".8" height=".8" fill="#1f7a2a"/><rect x="39.4" y="42.9" width=".8" height=".8" fill="#1f7a2a"/><rect x="23.8" y="69.4" width=".8" height=".8" fill="#1f7a2a"/><rect x="41.9" y="53.0" width=".8" height=".8" fill="#2fae3a"/><rect x="40.0" y="53.2" width=".8" height=".8" fill="#1f7a2a"/><rect x="27.3" y="58.9" width=".8" height=".8" fill="#3fd04a"/><rect x="28.7" y="62.7" width=".8" height=".8" fill="#3fd04a"/><rect x="27.3" y="55.3" width=".8" height=".8" fill="#1a5f22"/><rect x="18.5" y="42.0" width=".8" height=".8" fill="#1a5f22"/><rect x="31.8" y="74.3" width=".8" height=".8" fill="#1f7a2a"/><rect x="14.5" y="56.9" width=".8" height=".8" fill="#3fd04a"/><rect x="31.3" y="71.2" width=".8" height=".8" fill="#2fae3a"/><rect x="41.7" y="73.8" width=".8" height=".8" fill="#2fae3a"/><rect x="40.1" y="43.3" width=".8" height=".8" fill="#1f7a2a"/><rect x="43.0" y="71.5" width=".8" height=".8" fill="#2fae3a"/><rect x="13.8" y="66.4" width=".8" height=".8" fill="#1f7a2a"/><rect x="30.0" y="49.7" width=".8" height=".8" fill="#2fae3a"/><rect x="30.7" y="55.5" width=".8" height=".8" fill="#2fae3a"/><rect x="24.7" y="50.1" width=".8" height=".8" fill="#1a5f22"/><rect x="40.2" y="43.8" width=".8" height=".8" fill="#1f7a2a"/><rect x="19.9" y="59.4" width=".8" height=".8" fill="#2fae3a"/><rect x="19.1" y="67.9" width=".8" height=".8" fill="#1f7a2a"/><rect x="40.6" y="42.0" width=".8" height=".8" fill="#1a5f22"/><rect x="15.0" y="50.8" width=".8" height=".8" fill="#3fd04a"/><rect x="33.8" y="58.9" width=".8" height=".8" fill="#2fae3a"/><rect x="29.0" y="67.4" width=".8" height=".8" fill="#2fae3a"/><rect x="41.7" y="67.4" width=".8" height=".8" fill="#2fae3a"/><rect x="17.5" y="44.1" width=".8" height=".8" fill="#2fae3a"/><rect x="41.6" y="44.6" width=".8" height=".8" fill="#1a5f22"/><rect x="23.8" y="52.2" width=".8" height=".8" fill="#3fd04a"/><rect x="26.1" y="54.7" width=".8" height=".8" fill="#3fd04a"/><rect x="25.3" y="48.1" width=".8" height=".8" fill="#3fd04a"/><rect x="27.5" y="46.0" width=".8" height=".8" fill="#2fae3a"/><rect x="37.0" y="54.3" width=".8" height=".8" fill="#2fae3a"/><rect x="32.1" y="43.2" width=".8" height=".8" fill="#1a5f22"/><rect x="33.3" y="67.6" width=".8" height=".8" fill="#1a5f22"/><rect x="34.4" y="43.2" width=".8" height=".8" fill="#1a5f22"/><rect x="15.2" y="62.5" width=".8" height=".8" fill="#3fd04a"/><rect x="27.3" y="64.7" width=".8" height=".8" fill="#1a5f22"/><rect x="14.0" y="49.0" width=".8" height=".8" fill="#3fd04a"/><rect x="36.3" y="44.2" width=".8" height=".8" fill="#1a5f22"/><rect x="20.8" y="46.1" width=".8" height=".8" fill="#2fae3a"/><rect x="44.3" y="54.1" width=".8" height=".8" fill="#3fd04a"/><rect x="17.4" y="64.6" width=".8" height=".8" fill="#1a5f22"/><rect x="35.4" y="66.0" width=".8" height=".8" fill="#2fae3a"/><rect x="40.2" y="65.4" width=".8" height=".8" fill="#1a5f22"/><rect x="18.1" y="67.4" width=".8" height=".8" fill="#2fae3a"/><rect x="30.8" y="60.4" width=".8" height=".8" fill="#1a5f22"/><rect x="19.3" y="42.6" width=".8" height=".8" fill="#2fae3a"/><rect x="14.2" y="45.6" width=".8" height=".8" fill="#1a5f22"/><rect x="41.0" y="73.2" width=".8" height=".8" fill="#3fd04a"/><rect x="39.8" y="43.0" width=".8" height=".8" fill="#1f7a2a"/><rect x="16.9" y="66.5" width=".8" height=".8" fill="#2fae3a"/><rect x="31.6" y="70.5" width=".8" height=".8" fill="#1f7a2a"/><rect x="40.7" y="49.8" width=".8" height=".8" fill="#1f7a2a"/><rect x="48.6" y="41.2" width="34.6" height="34.6" fill="#0a2110"/><text x="65.6" y="38.4" font-size="5" fill="#555" text-anchor="middle" font-family="Liberation Serif, Noto Serif CJK SC, serif">50μg/mL</text><rect x="70.5" y="56.8" width=".8" height=".8" fill="#1a5f22"/><rect x="57.5" y="61.6" width=".8" height=".8" fill="#3fd04a"/><rect x="67.6" y="73.7" width=".8" height=".8" fill="#1a5f22"/><rect x="65.7" y="73.9" width=".8" height=".8" fill="#1a5f22"/><rect x="77.0" y="73.7" width=".8" height=".8" fill="#1a5f22"/><rect x="72.0" y="66.8" width=".8" height=".8" fill="#1a5f22"/><rect x="54.4" y="55.0" width=".8" height=".8" fill="#1f7a2a"/><rect x="54.6" y="58.2" width=".8" height=".8" fill="#1a5f22"/><rect x="79.4" y="58.9" width=".8" height=".8" fill="#1a5f22"/><rect x="68.6" y="70.1" width=".8" height=".8" fill="#1f7a2a"/><rect x="58.0" y="48.4" width=".8" height=".8" fill="#3fd04a"/><rect x="80.0" y="69.9" width=".8" height=".8" fill="#3fd04a"/><rect x="71.4" y="70.0" width=".8" height=".8" fill="#3fd04a"/><rect x="78.6" y="51.9" width=".8" height=".8" fill="#3fd04a"/><rect x="65.0" y="54.4" width=".8" height=".8" fill="#1f7a2a"/><rect x="68.0" y="49.7" width=".8" height=".8" fill="#1a5f22"/><rect x="74.7" y="46.5" width=".8" height=".8" fill="#1a5f22"/><rect x="72.3" y="48.6" width=".8" height=".8" fill="#2fae3a"/><rect x="65.1" y="65.6" width=".8" height=".8" fill="#1a5f22"/><rect x="75.0" y="70.9" width=".8" height=".8" fill="#2fae3a"/><rect x="64.6" y="49.4" width=".8" height=".8" fill="#1f7a2a"/><rect x="70.6" y="67.5" width=".8" height=".8" fill="#2fae3a"/><rect x="80.8" y="70.0" width=".8" height=".8" fill="#1f7a2a"/><rect x="78.6" y="67.4" width=".8" height=".8" fill="#1f7a2a"/><rect x="55.4" y="65.1" width=".8" height=".8" fill="#2fae3a"/><rect x="78.9" y="50.2" width=".8" height=".8" fill="#2fae3a"/><rect x="59.5" y="55.8" width=".8" height=".8" fill="#2fae3a"/><rect x="53.1" y="50.5" width=".8" height=".8" fill="#3fd04a"/><rect x="50.4" y="56.7" width=".8" height=".8" fill="#3fd04a"/><rect x="49.4" y="52.8" width=".8" height=".8" fill="#1a5f22"/><rect x="61.7" y="44.4" width=".8" height=".8" fill="#1a5f22"/><rect x="62.1" y="59.8" width=".8" height=".8" fill="#2fae3a"/><rect x="78.4" y="44.3" width=".8" height=".8" fill="#1a5f22"/><rect x="52.9" y="71.1" width=".8" height=".8" fill="#3fd04a"/><rect x="52.4" y="72.9" width=".8" height=".8" fill="#3fd04a"/><rect x="71.6" y="54.0" width=".8" height=".8" fill="#1a5f22"/><rect x="59.0" y="64.1" width=".8" height=".8" fill="#3fd04a"/><rect x="52.7" y="73.0" width=".8" height=".8" fill="#3fd04a"/><rect x="71.4" y="59.5" width=".8" height=".8" fill="#2fae3a"/><rect x="71.2" y="58.6" width=".8" height=".8" fill="#2fae3a"/><rect x="72.9" y="64.2" width=".8" height=".8" fill="#1f7a2a"/><rect x="70.5" y="65.9" width=".8" height=".8" fill="#1f7a2a"/><rect x="55.1" y="71.2" width=".8" height=".8" fill="#1a5f22"/><rect x="53.3" y="72.6" width=".8" height=".8" fill="#1f7a2a"/><rect x="79.6" y="63.1" width=".8" height=".8" fill="#1a5f22"/><rect x="67.5" y="63.2" width=".8" height=".8" fill="#1a5f22"/><rect x="65.1" y="67.6" width=".8" height=".8" fill="#2fae3a"/><rect x="52.7" y="47.8" width=".8" height=".8" fill="#1a5f22"/><rect x="61.1" y="50.6" width=".8" height=".8" fill="#1a5f22"/><rect x="51.0" y="46.3" width=".8" height=".8" fill="#1a5f22"/><rect x="65.9" y="50.0" width=".8" height=".8" fill="#3fd04a"/><rect x="78.1" y="73.0" width=".8" height=".8" fill="#1a5f22"/><rect x="67.1" y="67.3" width=".8" height=".8" fill="#3fd04a"/><rect x="65.6" y="74.7" width=".8" height=".8" fill="#1f7a2a"/><rect x="58.1" y="45.1" width=".8" height=".8" fill="#2fae3a"/><rect x="67.8" y="71.8" width=".8" height=".8" fill="#2fae3a"/><rect x="55.3" y="48.0" width=".8" height=".8" fill="#1a5f22"/><rect x="71.3" y="54.7" width=".8" height=".8" fill="#1f7a2a"/><rect x="68.7" y="46.6" width=".8" height=".8" fill="#1a5f22"/><rect x="75.5" y="59.8" width=".8" height=".8" fill="#1f7a2a"/><rect x="68.0" y="48.5" width=".8" height=".8" fill="#3fd04a"/><rect x="61.4" y="51.5" width=".8" height=".8" fill="#1a5f22"/><rect x="78.6" y="73.1" width=".8" height=".8" fill="#1a5f22"/><rect x="59.6" y="71.7" width=".8" height=".8" fill="#3fd04a"/><rect x="70.1" y="74.0" width=".8" height=".8" fill="#3fd04a"/><rect x="78.8" y="63.8" width=".8" height=".8" fill="#2fae3a"/><rect x="69.0" y="65.8" width=".8" height=".8" fill="#2fae3a"/><rect x="52.7" y="66.7" width=".8" height=".8" fill="#1f7a2a"/><rect x="65.4" y="59.1" width=".8" height=".8" fill="#1a5f22"/><rect x="55.8" y="67.6" width=".8" height=".8" fill="#1f7a2a"/><rect x="50.4" y="58.3" width=".8" height=".8" fill="#1a5f22"/><rect x="52.9" y="51.1" width=".8" height=".8" fill="#1f7a2a"/><rect x="53.7" y="67.9" width=".8" height=".8" fill="#2fae3a"/><rect x="50.0" y="62.2" width=".8" height=".8" fill="#2fae3a"/><rect x="65.7" y="42.4" width=".8" height=".8" fill="#3fd04a"/><rect x="59.9" y="70.5" width=".8" height=".8" fill="#1f7a2a"/><rect x="51.9" y="69.5" width=".8" height=".8" fill="#2fae3a"/><rect x="72.8" y="66.2" width=".8" height=".8" fill="#3fd04a"/><rect x="82.1" y="48.6" width=".8" height=".8" fill="#2fae3a"/><rect x="77.6" y="56.2" width=".8" height=".8" fill="#1f7a2a"/><rect x="65.2" y="45.4" width=".8" height=".8" fill="#2fae3a"/><rect x="62.7" y="69.7" width=".8" height=".8" fill="#1f7a2a"/><rect x="62.1" y="57.4" width=".8" height=".8" fill="#2fae3a"/><rect x="66.9" y="55.7" width=".8" height=".8" fill="#1a5f22"/><rect x="59.3" y="57.1" width=".8" height=".8" fill="#1a5f22"/><rect x="63.7" y="56.8" width=".8" height=".8" fill="#2fae3a"/><rect x="72.9" y="53.9" width=".8" height=".8" fill="#3fd04a"/><rect x="64.0" y="53.7" width=".8" height=".8" fill="#1a5f22"/><rect x="56.6" y="41.9" width=".8" height=".8" fill="#1f7a2a"/><rect x="57.7" y="54.0" width=".8" height=".8" fill="#1a5f22"/><rect x="66.8" y="47.1" width=".8" height=".8" fill="#2fae3a"/><rect x="54.8" y="55.1" width=".8" height=".8" fill="#1f7a2a"/><rect x="70.2" y="46.4" width=".8" height=".8" fill="#1f7a2a"/><rect x="63.8" y="47.9" width=".8" height=".8" fill="#2fae3a"/><rect x="62.5" y="52.3" width=".8" height=".8" fill="#2fae3a"/><rect x="72.4" y="43.5" width=".8" height=".8" fill="#1a5f22"/><rect x="50.5" y="58.1" width=".8" height=".8" fill="#1f7a2a"/><rect x="57.2" y="54.6" width=".8" height=".8" fill="#1f7a2a"/><rect x="54.6" y="62.3" width=".8" height=".8" fill="#3fd04a"/><rect x="79.3" y="61.4" width=".8" height=".8" fill="#3fd04a"/><rect x="58.3" y="67.8" width=".8" height=".8" fill="#1a5f22"/><rect x="75.2" y="73.5" width=".8" height=".8" fill="#1a5f22"/><rect x="57.4" y="50.6" width=".8" height=".8" fill="#3fd04a"/><rect x="70.0" y="53.2" width=".8" height=".8" fill="#2fae3a"/><rect x="51.1" y="56.2" width=".8" height=".8" fill="#2fae3a"/><rect x="68.7" y="41.9" width=".8" height=".8" fill="#2fae3a"/><rect x="71.7" y="42.4" width=".8" height=".8" fill="#2fae3a"/><rect x="65.1" y="48.0" width=".8" height=".8" fill="#3fd04a"/><rect x="55.8" y="73.9" width=".8" height=".8" fill="#1a5f22"/><rect x="60.4" y="57.6" width=".8" height=".8" fill="#3fd04a"/><rect x="80.2" y="42.9" width=".8" height=".8" fill="#3fd04a"/><rect x="74.0" y="62.6" width=".8" height=".8" fill="#1a5f22"/><rect x="52.1" y="51.5" width=".8" height=".8" fill="#1a5f22"/><rect x="53.0" y="54.7" width=".8" height=".8" fill="#3fd04a"/><rect x="66.9" y="67.5" width=".8" height=".8" fill="#1a5f22"/><rect x="55.0" y="66.2" width=".8" height=".8" fill="#1a5f22"/><rect x="76.8" y="60.1" width=".8" height=".8" fill="#1f7a2a"/><rect x="61.2" y="55.5" width=".8" height=".8" fill="#1f7a2a"/><rect x="63.9" y="65.0" width=".8" height=".8" fill="#3fd04a"/><rect x="58.1" y="47.4" width=".8" height=".8" fill="#1a5f22"/><rect x="80.5" y="43.2" width=".8" height=".8" fill="#1f7a2a"/><rect x="72.7" y="42.6" width=".8" height=".8" fill="#1a5f22"/><rect x="52.2" y="64.6" width=".8" height=".8" fill="#2fae3a"/><rect x="59.8" y="61.6" width=".8" height=".8" fill="#2fae3a"/><rect x="78.2" y="70.6" width=".8" height=".8" fill="#1a5f22"/><rect x="64.6" y="70.5" width=".8" height=".8" fill="#3fd04a"/><rect x="82.1" y="41.9" width=".8" height=".8" fill="#1f7a2a"/><rect x="62.4" y="73.3" width=".8" height=".8" fill="#2fae3a"/><rect x="60.4" y="52.1" width=".8" height=".8" fill="#1a5f22"/><rect x="51.9" y="63.2" width=".8" height=".8" fill="#1f7a2a"/><rect x="71.9" y="74.1" width=".8" height=".8" fill="#1f7a2a"/><rect x="68.5" y="42.2" width=".8" height=".8" fill="#1f7a2a"/><rect x="58.7" y="48.7" width=".8" height=".8" fill="#1a5f22"/><rect x="65.9" y="71.7" width=".8" height=".8" fill="#3fd04a"/><rect x="75.2" y="59.5" width=".8" height=".8" fill="#1f7a2a"/><rect x="64.6" y="62.3" width=".8" height=".8" fill="#2fae3a"/><rect x="76.4" y="45.5" width=".8" height=".8" fill="#2fae3a"/><rect x="77.5" y="45.1" width=".8" height=".8" fill="#3fd04a"/><rect x="52.0" y="57.2" width=".8" height=".8" fill="#1f7a2a"/><rect x="76.4" y="64.3" width=".8" height=".8" fill="#2fae3a"/><rect x="70.4" y="66.9" width=".8" height=".8" fill="#3fd04a"/><rect x="62.5" y="63.6" width=".8" height=".8" fill="#2fae3a"/><rect x="58.8" y="73.0" width=".8" height=".8" fill="#1a5f22"/><rect x="76.1" y="48.6" width=".8" height=".8" fill="#2fae3a"/><rect x="64.5" y="65.8" width=".8" height=".8" fill="#2fae3a"/><rect x="60.5" y="48.1" width=".8" height=".8" fill="#2fae3a"/><rect x="79.7" y="64.4" width=".8" height=".8" fill="#3fd04a"/><rect x="63.2" y="63.2" width=".8" height=".8" fill="#1f7a2a"/><rect x="57.4" y="69.5" width=".8" height=".8" fill="#2fae3a"/><rect x="60.3" y="56.0" width=".8" height=".8" fill="#2fae3a"/><rect x="84.3" y="41.2" width="34.6" height="34.6" fill="#0a2110"/><text x="101.3" y="38.4" font-size="5" fill="#555" text-anchor="middle" font-family="Liberation Serif, Noto Serif CJK SC, serif">100μg/mL</text><rect x="93.2" y="52.5" width=".8" height=".8" fill="#1f7a2a"/><rect x="108.9" y="70.7" width=".8" height=".8" fill="#1a5f22"/><rect x="115.6" y="59.5" width=".8" height=".8" fill="#1a5f22"/><rect x="97.0" y="48.1" width=".8" height=".8" fill="#1a5f22"/><rect x="100.9" y="67.3" width=".8" height=".8" fill="#1a5f22"/><rect x="100.4" y="61.2" width=".8" height=".8" fill="#2fae3a"/><rect x="94.5" y="72.6" width=".8" height=".8" fill="#1f7a2a"/><rect x="114.4" y="42.7" width=".8" height=".8" fill="#1f7a2a"/><rect x="94.6" y="58.9" width=".8" height=".8" fill="#1a5f22"/><rect x="86.2" y="66.4" width=".8" height=".8" fill="#3fd04a"/><rect x="101.1" y="43.0" width=".8" height=".8" fill="#1a5f22"/><rect x="109.4" y="66.4" width=".8" height=".8" fill="#3fd04a"/><rect x="89.6" y="56.5" width=".8" height=".8" fill="#1a5f22"/><rect x="99.5" y="48.6" width=".8" height=".8" fill="#1a5f22"/><rect x="110.1" y="64.9" width=".8" height=".8" fill="#1a5f22"/><rect x="117.2" y="70.7" width=".8" height=".8" fill="#3fd04a"/><rect x="116.0" y="56.0" width=".8" height=".8" fill="#1a5f22"/><rect x="100.5" y="74.8" width=".8" height=".8" fill="#1f7a2a"/><rect x="96.8" y="69.9" width=".8" height=".8" fill="#3fd04a"/><rect x="85.9" y="54.1" width=".8" height=".8" fill="#3fd04a"/><rect x="111.5" y="51.6" width=".8" height=".8" fill="#1f7a2a"/><rect x="115.6" y="58.9" width=".8" height=".8" fill="#2fae3a"/><rect x="89.2" y="59.3" width=".8" height=".8" fill="#2fae3a"/><rect x="90.4" y="43.5" width=".8" height=".8" fill="#1f7a2a"/><rect x="117.4" y="68.0" width=".8" height=".8" fill="#3fd04a"/><rect x="117.2" y="67.7" width=".8" height=".8" fill="#2fae3a"/><rect x="101.1" y="49.7" width=".8" height=".8" fill="#3fd04a"/><rect x="99.2" y="53.0" width=".8" height=".8" fill="#2fae3a"/><rect x="104.8" y="68.6" width=".8" height=".8" fill="#1a5f22"/><rect x="95.2" y="50.0" width=".8" height=".8" fill="#1a5f22"/><rect x="98.7" y="50.4" width=".8" height=".8" fill="#2fae3a"/><rect x="85.9" y="43.0" width=".8" height=".8" fill="#1f7a2a"/><rect x="115.0" y="68.5" width=".8" height=".8" fill="#1f7a2a"/><rect x="116.4" y="66.3" width=".8" height=".8" fill="#1a5f22"/><rect x="101.7" y="69.2" width=".8" height=".8" fill="#1f7a2a"/><rect x="94.1" y="47.4" width=".8" height=".8" fill="#2fae3a"/><rect x="100.9" y="43.8" width=".8" height=".8" fill="#1a5f22"/><rect x="100.3" y="63.8" width=".8" height=".8" fill="#1a5f22"/><rect x="97.1" y="62.7" width=".8" height=".8" fill="#3fd04a"/><rect x="90.9" y="64.4" width=".8" height=".8" fill="#2fae3a"/><rect x="98.4" y="53.4" width=".8" height=".8" fill="#1a5f22"/><rect x="94.1" y="50.2" width=".8" height=".8" fill="#3fd04a"/><rect x="116.6" y="46.9" width=".8" height=".8" fill="#3fd04a"/><rect x="89.5" y="43.0" width=".8" height=".8" fill="#1a5f22"/><rect x="113.0" y="69.1" width=".8" height=".8" fill="#3fd04a"/><rect x="85.9" y="60.8" width=".8" height=".8" fill="#2fae3a"/><rect x="101.0" y="51.0" width=".8" height=".8" fill="#3fd04a"/><rect x="88.3" y="63.9" width=".8" height=".8" fill="#3fd04a"/><rect x="86.0" y="57.9" width=".8" height=".8" fill="#1a5f22"/><rect x="91.3" y="72.2" width=".8" height=".8" fill="#1f7a2a"/><rect x="106.5" y="72.9" width=".8" height=".8" fill="#1a5f22"/><rect x="95.3" y="50.7" width=".8" height=".8" fill="#2fae3a"/><rect x="116.0" y="52.3" width=".8" height=".8" fill="#1a5f22"/><rect x="103.2" y="43.0" width=".8" height=".8" fill="#1a5f22"/><rect x="93.2" y="74.1" width=".8" height=".8" fill="#2fae3a"/><rect x="101.2" y="73.4" width=".8" height=".8" fill="#2fae3a"/><rect x="107.9" y="45.6" width=".8" height=".8" fill="#2fae3a"/><rect x="105.7" y="68.8" width=".8" height=".8" fill="#2fae3a"/><rect x="116.0" y="74.0" width=".8" height=".8" fill="#2fae3a"/><rect x="99.1" y="74.3" width=".8" height=".8" fill="#1a5f22"/><rect x="93.7" y="59.8" width=".8" height=".8" fill="#2fae3a"/><rect x="90.7" y="57.9" width=".8" height=".8" fill="#1f7a2a"/><rect x="89.7" y="71.7" width=".8" height=".8" fill="#1f7a2a"/><rect x="107.7" y="57.2" width=".8" height=".8" fill="#1a5f22"/><rect x="106.2" y="46.5" width=".8" height=".8" fill="#2fae3a"/><rect x="90.8" y="62.5" width=".8" height=".8" fill="#3fd04a"/><rect x="91.2" y="68.9" width=".8" height=".8" fill="#1f7a2a"/><rect x="86.5" y="73.5" width=".8" height=".8" fill="#1f7a2a"/><rect x="97.5" y="45.3" width=".8" height=".8" fill="#1a5f22"/><rect x="90.9" y="42.7" width=".8" height=".8" fill="#2fae3a"/><rect x="89.2" y="46.6" width=".8" height=".8" fill="#1f7a2a"/><rect x="97.6" y="72.8" width=".8" height=".8" fill="#2fae3a"/><rect x="115.7" y="42.0" width=".8" height=".8" fill="#3fd04a"/><rect x="117.8" y="74.1" width=".8" height=".8" fill="#1f7a2a"/><rect x="87.0" y="59.8" width=".8" height=".8" fill="#1a5f22"/><rect x="88.3" y="69.7" width=".8" height=".8" fill="#1a5f22"/><rect x="85.6" y="53.2" width=".8" height=".8" fill="#1a5f22"/><rect x="103.7" y="57.1" width=".8" height=".8" fill="#3fd04a"/><rect x="99.5" y="59.4" width=".8" height=".8" fill="#1a5f22"/><rect x="91.5" y="61.4" width=".8" height=".8" fill="#1f7a2a"/><rect x="94.8" y="70.1" width=".8" height=".8" fill="#1f7a2a"/><rect x="95.4" y="69.5" width=".8" height=".8" fill="#1f7a2a"/><rect x="86.7" y="74.1" width=".8" height=".8" fill="#1a5f22"/><rect x="105.2" y="47.7" width=".8" height=".8" fill="#2fae3a"/><rect x="90.1" y="45.8" width=".8" height=".8" fill="#1a5f22"/><rect x="117.6" y="64.4" width=".8" height=".8" fill="#3fd04a"/><rect x="88.0" y="59.6" width=".8" height=".8" fill="#1a5f22"/><rect x="95.7" y="61.3" width=".8" height=".8" fill="#1f7a2a"/><rect x="95.6" y="58.5" width=".8" height=".8" fill="#3fd04a"/><rect x="105.9" y="61.3" width=".8" height=".8" fill="#3fd04a"/><rect x="113.4" y="69.4" width=".8" height=".8" fill="#3fd04a"/><rect x="117.1" y="51.6" width=".8" height=".8" fill="#1f7a2a"/><rect x="89.0" y="58.3" width=".8" height=".8" fill="#3fd04a"/><rect x="109.0" y="50.0" width=".8" height=".8" fill="#1a5f22"/><rect x="116.8" y="56.7" width=".8" height=".8" fill="#1a5f22"/><rect x="95.9" y="67.8" width=".8" height=".8" fill="#1f7a2a"/><rect x="117.5" y="59.2" width=".8" height=".8" fill="#1a5f22"/><rect x="117.7" y="43.5" width=".8" height=".8" fill="#1a5f22"/><rect x="98.9" y="69.8" width=".8" height=".8" fill="#3fd04a"/><rect x="86.9" y="70.0" width=".8" height=".8" fill="#1a5f22"/><rect x="91.9" y="44.3" width=".8" height=".8" fill="#1f7a2a"/><rect x="86.7" y="58.1" width=".8" height=".8" fill="#2fae3a"/><rect x="99.1" y="70.4" width=".8" height=".8" fill="#3fd04a"/><rect x="85.3" y="54.1" width=".8" height=".8" fill="#3fd04a"/><rect x="98.1" y="54.1" width=".8" height=".8" fill="#2fae3a"/><rect x="104.2" y="46.6" width=".8" height=".8" fill="#1f7a2a"/><rect x="84.9" y="43.9" width=".8" height=".8" fill="#2fae3a"/><rect x="89.5" y="44.5" width=".8" height=".8" fill="#3fd04a"/><rect x="99.3" y="48.3" width=".8" height=".8" fill="#2fae3a"/><rect x="102.7" y="72.2" width=".8" height=".8" fill="#1a5f22"/><rect x="109.2" y="69.1" width=".8" height=".8" fill="#1f7a2a"/><rect x="99.5" y="64.3" width=".8" height=".8" fill="#2fae3a"/><rect x="101.7" y="72.4" width=".8" height=".8" fill="#1f7a2a"/><rect x="100.6" y="71.2" width=".8" height=".8" fill="#3fd04a"/><rect x="103.1" y="45.7" width=".8" height=".8" fill="#1f7a2a"/><rect x="104.7" y="44.6" width=".8" height=".8" fill="#2fae3a"/><rect x="111.2" y="54.4" width=".8" height=".8" fill="#1a5f22"/><rect x="112.4" y="47.9" width=".8" height=".8" fill="#3fd04a"/><rect x="89.5" y="48.5" width=".8" height=".8" fill="#1a5f22"/><rect x="104.2" y="73.1" width=".8" height=".8" fill="#3fd04a"/><rect x="99.3" y="45.0" width=".8" height=".8" fill="#2fae3a"/><rect x="87.0" y="70.7" width=".8" height=".8" fill="#3fd04a"/><rect x="87.1" y="42.1" width=".8" height=".8" fill="#1a5f22"/><rect x="115.0" y="62.6" width=".8" height=".8" fill="#2fae3a"/><rect x="112.2" y="52.7" width=".8" height=".8" fill="#1a5f22"/><rect x="114.0" y="49.3" width=".8" height=".8" fill="#3fd04a"/><rect x="91.6" y="54.7" width=".8" height=".8" fill="#2fae3a"/><rect x="86.6" y="58.9" width=".8" height=".8" fill="#1f7a2a"/><rect x="103.8" y="44.6" width=".8" height=".8" fill="#1f7a2a"/><rect x="112.0" y="69.0" width=".8" height=".8" fill="#1a5f22"/><rect x="94.3" y="74.2" width=".8" height=".8" fill="#1f7a2a"/><rect x="91.6" y="51.7" width=".8" height=".8" fill="#1f7a2a"/><rect x="104.1" y="53.8" width=".8" height=".8" fill="#3fd04a"/><rect x="95.3" y="70.2" width=".8" height=".8" fill="#1f7a2a"/><rect x="99.7" y="65.6" width=".8" height=".8" fill="#3fd04a"/><rect x="105.7" y="58.1" width=".8" height=".8" fill="#1f7a2a"/><rect x="91.0" y="45.2" width=".8" height=".8" fill="#1a5f22"/><rect x="88.9" y="71.9" width=".8" height=".8" fill="#1a5f22"/><rect x="112.7" y="52.2" width=".8" height=".8" fill="#2fae3a"/><rect x="95.7" y="49.9" width=".8" height=".8" fill="#2fae3a"/><rect x="92.7" y="53.9" width=".8" height=".8" fill="#1f7a2a"/><rect x="90.8" y="50.1" width=".8" height=".8" fill="#3fd04a"/><rect x="86.6" y="73.7" width=".8" height=".8" fill="#2fae3a"/><rect x="91.8" y="51.8" width=".8" height=".8" fill="#1f7a2a"/><rect x="103.5" y="49.9" width=".8" height=".8" fill="#1f7a2a"/><rect x="92.0" y="63.9" width=".8" height=".8" fill="#1f7a2a"/><rect x="90.7" y="66.6" width=".8" height=".8" fill="#1a5f22"/><rect x="104.6" y="55.8" width=".8" height=".8" fill="#1f7a2a"/><rect x="105.6" y="56.4" width=".8" height=".8" fill="#2fae3a"/><rect x="87.5" y="59.5" width=".8" height=".8" fill="#1a5f22"/><rect x="101.1" y="60.9" width=".8" height=".8" fill="#3fd04a"/><rect x="102.1" y="55.6" width=".8" height=".8" fill="#1a5f22"/><rect x="92.2" y="68.8" width=".8" height=".8" fill="#1a5f22"/><rect x="96.3" y="74.7" width=".8" height=".8" fill="#1a5f22"/><rect x="109.9" y="45.6" width=".8" height=".8" fill="#1a5f22"/><rect x="96.1" y="66.0" width=".8" height=".8" fill="#3fd04a"/><rect x="88.5" y="59.2" width=".8" height=".8" fill="#3fd04a"/><rect x="100.7" y="59.6" width=".8" height=".8" fill="#1a5f22"/><rect x="97.3" y="43.2" width=".8" height=".8" fill="#3fd04a"/><rect x="112.1" y="48.5" width=".8" height=".8" fill="#2fae3a"/><rect x="108.1" y="74.0" width=".8" height=".8" fill="#3fd04a"/><rect x="104.2" y="64.2" width=".8" height=".8" fill="#3fd04a"/><rect x="102.8" y="74.4" width=".8" height=".8" fill="#3fd04a"/><rect x="115.4" y="55.8" width=".8" height=".8" fill="#3fd04a"/><rect x="98.9" y="54.0" width=".8" height=".8" fill="#1f7a2a"/><rect x="93.1" y="64.8" width=".8" height=".8" fill="#1a5f22"/><rect x="108.4" y="52.5" width=".8" height=".8" fill="#1f7a2a"/><rect x="95.4" y="65.7" width=".8" height=".8" fill="#1f7a2a"/><rect x="102.8" y="57.2" width=".8" height=".8" fill="#1a5f22"/><rect x="103.1" y="53.9" width=".8" height=".8" fill="#2fae3a"/><rect x="104.9" y="65.0" width=".8" height=".8" fill="#1f7a2a"/><rect x="101.6" y="47.3" width=".8" height=".8" fill="#2fae3a"/><rect x="103.1" y="45.7" width=".8" height=".8" fill="#1a5f22"/><rect x="113.6" y="58.8" width=".8" height=".8" fill="#1a5f22"/><rect x="93.9" y="57.6" width=".8" height=".8" fill="#3fd04a"/><rect x="92.5" y="50.4" width=".8" height=".8" fill="#1f7a2a"/><rect x="116.2" y="57.5" width=".8" height=".8" fill="#1a5f22"/><rect x="89.8" y="54.0" width=".8" height=".8" fill="#1f7a2a"/><rect x="93.6" y="67.5" width=".8" height=".8" fill="#1f7a2a"/><rect x="106.9" y="49.9" width=".8" height=".8" fill="#3fd04a"/><rect x="111.0" y="66.0" width=".8" height=".8" fill="#2fae3a"/><rect x="88.2" y="65.0" width=".8" height=".8" fill="#2fae3a"/><rect x="92.3" y="56.9" width=".8" height=".8" fill="#2fae3a"/><rect x="95.7" y="67.0" width=".8" height=".8" fill="#1f7a2a"/><rect x="86.3" y="58.0" width=".8" height=".8" fill="#1f7a2a"/><rect x="97.2" y="70.5" width=".8" height=".8" fill="#1a5f22"/><rect x="101.5" y="64.5" width=".8" height=".8" fill="#1a5f22"/><rect x="117.2" y="56.0" width=".8" height=".8" fill="#3fd04a"/><rect x="102.9" y="61.1" width=".8" height=".8" fill="#1a5f22"/><rect x="90.0" y="42.8" width=".8" height=".8" fill="#1a5f22"/><rect x="106.0" y="48.8" width=".8" height=".8" fill="#1f7a2a"/><rect x="101.6" y="73.3" width=".8" height=".8" fill="#3fd04a"/><rect x="93.4" y="62.5" width=".8" height=".8" fill="#3fd04a"/><rect x="91.6" y="47.0" width=".8" height=".8" fill="#2fae3a"/><rect x="100.9" y="66.2" width=".8" height=".8" fill="#1f7a2a"/><rect x="88.8" y="52.9" width=".8" height=".8" fill="#1f7a2a"/><rect x="93.5" y="44.7" width=".8" height=".8" fill="#2fae3a"/><rect x="114.1" y="46.4" width=".8" height=".8" fill="#2fae3a"/><rect x="107.9" y="62.6" width=".8" height=".8" fill="#1a5f22"/><rect x="108.3" y="60.0" width=".8" height=".8" fill="#1a5f22"/><rect x="93.6" y="64.9" width=".8" height=".8" fill="#2fae3a"/><rect x="87.2" y="64.3" width=".8" height=".8" fill="#1a5f22"/><rect x="90.5" y="42.9" width=".8" height=".8" fill="#3fd04a"/><rect x="112.4" y="53.7" width=".8" height=".8" fill="#2fae3a"/><rect x="111.4" y="54.6" width=".8" height=".8" fill="#1a5f22"/><rect x="115.8" y="65.6" width=".8" height=".8" fill="#1f7a2a"/><rect x="99.5" y="49.6" width=".8" height=".8" fill="#2fae3a"/><rect x="96.3" y="49.4" width=".8" height=".8" fill="#1a5f22"/><rect x="97.8" y="54.9" width=".8" height=".8" fill="#2fae3a"/><rect x="102.9" y="61.5" width=".8" height=".8" fill="#3fd04a"/><rect x="120" y="41.2" width="34.6" height="34.6" fill="#0a2110"/><text x="137" y="38.4" font-size="5" fill="#555" text-anchor="middle" font-family="Liberation Serif, Noto Serif CJK SC, serif">200μg/mL</text><rect x="123.8" y="55.2" width=".8" height=".8" fill="#3fd04a"/><rect x="128.0" y="56.8" width=".8" height=".8" fill="#3fd04a"/><rect x="141.7" y="74.3" width=".8" height=".8" fill="#1a5f22"/><rect x="142.5" y="66.1" width=".8" height=".8" fill="#1a5f22"/><rect x="141.6" y="68.2" width=".8" height=".8" fill="#1f7a2a"/><rect x="146.8" y="58.3" width=".8" height=".8" fill="#2fae3a"/><rect x="130.0" y="72.8" width=".8" height=".8" fill="#1f7a2a"/><rect x="135.1" y="46.0" width=".8" height=".8" fill="#1f7a2a"/><rect x="128.1" y="59.2" width=".8" height=".8" fill="#3fd04a"/><rect x="124.6" y="58.3" width=".8" height=".8" fill="#1a5f22"/><rect x="147.1" y="66.2" width=".8" height=".8" fill="#1a5f22"/><rect x="121.3" y="42.6" width=".8" height=".8" fill="#2fae3a"/><rect x="122.5" y="58.6" width=".8" height=".8" fill="#1a5f22"/><rect x="150.5" y="43.4" width=".8" height=".8" fill="#3fd04a"/><rect x="130.7" y="57.4" width=".8" height=".8" fill="#3fd04a"/><rect x="146.3" y="68.3" width=".8" height=".8" fill="#3fd04a"/><rect x="141.2" y="44.7" width=".8" height=".8" fill="#2fae3a"/><rect x="124.4" y="64.3" width=".8" height=".8" fill="#1f7a2a"/><rect x="123.4" y="66.4" width=".8" height=".8" fill="#1f7a2a"/><rect x="141.4" y="44.5" width=".8" height=".8" fill="#3fd04a"/><rect x="137.5" y="73.6" width=".8" height=".8" fill="#2fae3a"/><rect x="137.0" y="53.8" width=".8" height=".8" fill="#1a5f22"/><rect x="151.2" y="55.7" width=".8" height=".8" fill="#3fd04a"/><rect x="139.1" y="54.7" width=".8" height=".8" fill="#1a5f22"/><rect x="131.9" y="72.8" width=".8" height=".8" fill="#3fd04a"/><rect x="130.7" y="66.2" width=".8" height=".8" fill="#3fd04a"/><rect x="146.6" y="66.5" width=".8" height=".8" fill="#1f7a2a"/><rect x="132.4" y="63.3" width=".8" height=".8" fill="#1a5f22"/><rect x="152.2" y="57.5" width=".8" height=".8" fill="#1f7a2a"/><rect x="144.4" y="61.6" width=".8" height=".8" fill="#1f7a2a"/><rect x="153.5" y="43.4" width=".8" height=".8" fill="#1a5f22"/><rect x="128.6" y="47.8" width=".8" height=".8" fill="#2fae3a"/><rect x="142.2" y="71.9" width=".8" height=".8" fill="#1a5f22"/><rect x="129.0" y="71.0" width=".8" height=".8" fill="#3fd04a"/><rect x="133.0" y="68.8" width=".8" height=".8" fill="#3fd04a"/><rect x="144.8" y="66.6" width=".8" height=".8" fill="#3fd04a"/><rect x="150.4" y="54.7" width=".8" height=".8" fill="#1f7a2a"/><rect x="125.2" y="70.8" width=".8" height=".8" fill="#2fae3a"/><rect x="141.8" y="65.8" width=".8" height=".8" fill="#2fae3a"/><rect x="140.5" y="55.0" width=".8" height=".8" fill="#1a5f22"/><rect x="133.1" y="58.4" width=".8" height=".8" fill="#1a5f22"/><rect x="140.8" y="57.5" width=".8" height=".8" fill="#2fae3a"/><rect x="141.9" y="65.4" width=".8" height=".8" fill="#2fae3a"/><rect x="127.0" y="71.2" width=".8" height=".8" fill="#2fae3a"/><rect x="152.9" y="46.4" width=".8" height=".8" fill="#2fae3a"/><rect x="124.6" y="61.4" width=".8" height=".8" fill="#3fd04a"/><rect x="138.7" y="46.0" width=".8" height=".8" fill="#1a5f22"/><rect x="135.0" y="46.6" width=".8" height=".8" fill="#1f7a2a"/><rect x="143.4" y="62.5" width=".8" height=".8" fill="#1a5f22"/><rect x="131.0" y="56.4" width=".8" height=".8" fill="#2fae3a"/><rect x="129.0" y="42.4" width=".8" height=".8" fill="#3fd04a"/><rect x="131.1" y="54.5" width=".8" height=".8" fill="#2fae3a"/><rect x="129.9" y="44.6" width=".8" height=".8" fill="#1a5f22"/><rect x="128.6" y="49.1" width=".8" height=".8" fill="#3fd04a"/><rect x="128.2" y="71.5" width=".8" height=".8" fill="#3fd04a"/><rect x="139.0" y="67.3" width=".8" height=".8" fill="#1f7a2a"/><rect x="139.1" y="54.9" width=".8" height=".8" fill="#3fd04a"/><rect x="147.5" y="49.7" width=".8" height=".8" fill="#1f7a2a"/><rect x="145.5" y="68.9" width=".8" height=".8" fill="#2fae3a"/><rect x="146.7" y="53.1" width=".8" height=".8" fill="#3fd04a"/><rect x="125.7" y="73.8" width=".8" height=".8" fill="#1f7a2a"/><rect x="150.8" y="60.2" width=".8" height=".8" fill="#2fae3a"/><rect x="135.6" y="50.1" width=".8" height=".8" fill="#1a5f22"/><rect x="129.4" y="51.3" width=".8" height=".8" fill="#1f7a2a"/><rect x="135.5" y="48.5" width=".8" height=".8" fill="#3fd04a"/><rect x="142.5" y="45.3" width=".8" height=".8" fill="#1a5f22"/><rect x="144.2" y="68.0" width=".8" height=".8" fill="#1f7a2a"/><rect x="128.9" y="45.9" width=".8" height=".8" fill="#2fae3a"/><rect x="121.4" y="70.6" width=".8" height=".8" fill="#3fd04a"/><rect x="140.4" y="49.2" width=".8" height=".8" fill="#2fae3a"/><rect x="124.4" y="52.2" width=".8" height=".8" fill="#2fae3a"/><rect x="134.0" y="52.8" width=".8" height=".8" fill="#3fd04a"/><rect x="121.3" y="56.4" width=".8" height=".8" fill="#1a5f22"/><rect x="153.5" y="47.4" width=".8" height=".8" fill="#2fae3a"/><rect x="124.6" y="47.4" width=".8" height=".8" fill="#1a5f22"/><rect x="129.8" y="69.8" width=".8" height=".8" fill="#1f7a2a"/><rect x="148.5" y="54.2" width=".8" height=".8" fill="#3fd04a"/><rect x="143.6" y="65.9" width=".8" height=".8" fill="#3fd04a"/><rect x="136.4" y="58.2" width=".8" height=".8" fill="#1a5f22"/><rect x="120.9" y="44.2" width=".8" height=".8" fill="#3fd04a"/><rect x="126.7" y="74.2" width=".8" height=".8" fill="#2fae3a"/><rect x="142.4" y="47.5" width=".8" height=".8" fill="#3fd04a"/><rect x="131.0" y="53.8" width=".8" height=".8" fill="#2fae3a"/><rect x="148.3" y="69.7" width=".8" height=".8" fill="#2fae3a"/><rect x="152.9" y="43.6" width=".8" height=".8" fill="#1a5f22"/><rect x="126.0" y="62.9" width=".8" height=".8" fill="#1a5f22"/><rect x="132.1" y="57.8" width=".8" height=".8" fill="#2fae3a"/><rect x="153.6" y="64.1" width=".8" height=".8" fill="#2fae3a"/><rect x="124.2" y="67.0" width=".8" height=".8" fill="#2fae3a"/><rect x="127.3" y="45.2" width=".8" height=".8" fill="#2fae3a"/><rect x="142.5" y="42.7" width=".8" height=".8" fill="#1f7a2a"/><rect x="122.2" y="56.3" width=".8" height=".8" fill="#2fae3a"/><rect x="137.5" y="72.7" width=".8" height=".8" fill="#1f7a2a"/><rect x="131.4" y="56.5" width=".8" height=".8" fill="#3fd04a"/><rect x="145.9" y="64.8" width=".8" height=".8" fill="#2fae3a"/><rect x="149.0" y="65.0" width=".8" height=".8" fill="#2fae3a"/><rect x="127.8" y="61.2" width=".8" height=".8" fill="#1f7a2a"/><rect x="143.7" y="53.3" width=".8" height=".8" fill="#1a5f22"/><rect x="142.7" y="46.3" width=".8" height=".8" fill="#3fd04a"/><rect x="149.0" y="51.1" width=".8" height=".8" fill="#1f7a2a"/><rect x="145.6" y="59.8" width=".8" height=".8" fill="#3fd04a"/><rect x="135.1" y="54.7" width=".8" height=".8" fill="#3fd04a"/><rect x="130.2" y="53.2" width=".8" height=".8" fill="#1f7a2a"/><rect x="130.4" y="44.2" width=".8" height=".8" fill="#1a5f22"/><rect x="144.7" y="61.4" width=".8" height=".8" fill="#1a5f22"/><rect x="152.5" y="58.6" width=".8" height=".8" fill="#1f7a2a"/><rect x="151.0" y="62.5" width=".8" height=".8" fill="#2fae3a"/><rect x="140.4" y="53.8" width=".8" height=".8" fill="#2fae3a"/><rect x="142.0" y="56.9" width=".8" height=".8" fill="#3fd04a"/><rect x="141.0" y="58.1" width=".8" height=".8" fill="#1a5f22"/><rect x="146.2" y="66.3" width=".8" height=".8" fill="#3fd04a"/><rect x="123.5" y="64.6" width=".8" height=".8" fill="#1a5f22"/><rect x="146.4" y="54.9" width=".8" height=".8" fill="#1f7a2a"/><rect x="127.3" y="50.5" width=".8" height=".8" fill="#1f7a2a"/><rect x="152.3" y="71.7" width=".8" height=".8" fill="#3fd04a"/><rect x="120.6" y="47.7" width=".8" height=".8" fill="#1f7a2a"/><rect x="141.2" y="49.6" width=".8" height=".8" fill="#2fae3a"/><rect x="130.2" y="63.6" width=".8" height=".8" fill="#2fae3a"/><rect x="120.6" y="56.3" width=".8" height=".8" fill="#1a5f22"/><rect x="140.4" y="71.9" width=".8" height=".8" fill="#3fd04a"/><rect x="146.4" y="47.7" width=".8" height=".8" fill="#1a5f22"/><rect x="139.9" y="58.2" width=".8" height=".8" fill="#1a5f22"/><rect x="131.9" y="43.9" width=".8" height=".8" fill="#2fae3a"/><rect x="132.6" y="59.5" width=".8" height=".8" fill="#3fd04a"/><rect x="147.7" y="47.7" width=".8" height=".8" fill="#1a5f22"/><rect x="125.8" y="44.9" width=".8" height=".8" fill="#3fd04a"/><rect x="139.8" y="49.7" width=".8" height=".8" fill="#2fae3a"/><rect x="121.0" y="59.8" width=".8" height=".8" fill="#3fd04a"/><rect x="125.3" y="51.2" width=".8" height=".8" fill="#1f7a2a"/><rect x="132.1" y="67.7" width=".8" height=".8" fill="#3fd04a"/><rect x="139.7" y="46.7" width=".8" height=".8" fill="#1a5f22"/><rect x="142.7" y="55.2" width=".8" height=".8" fill="#1a5f22"/><rect x="151.0" y="69.6" width=".8" height=".8" fill="#2fae3a"/><rect x="152.8" y="50.6" width=".8" height=".8" fill="#3fd04a"/><rect x="132.6" y="42.1" width=".8" height=".8" fill="#2fae3a"/><rect x="134.0" y="43.3" width=".8" height=".8" fill="#1a5f22"/><rect x="145.7" y="64.5" width=".8" height=".8" fill="#1a5f22"/><rect x="122.0" y="50.6" width=".8" height=".8" fill="#3fd04a"/><rect x="126.7" y="71.7" width=".8" height=".8" fill="#3fd04a"/><rect x="149.6" y="66.2" width=".8" height=".8" fill="#1f7a2a"/><rect x="143.6" y="53.6" width=".8" height=".8" fill="#1f7a2a"/><rect x="145.3" y="68.7" width=".8" height=".8" fill="#3fd04a"/><rect x="143.5" y="51.3" width=".8" height=".8" fill="#1f7a2a"/><rect x="128.1" y="70.9" width=".8" height=".8" fill="#2fae3a"/><rect x="128.7" y="47.0" width=".8" height=".8" fill="#3fd04a"/><rect x="127.0" y="60.6" width=".8" height=".8" fill="#1a5f22"/><rect x="152.9" y="66.9" width=".8" height=".8" fill="#1a5f22"/><rect x="149.8" y="47.3" width=".8" height=".8" fill="#1a5f22"/><rect x="148.1" y="74.5" width=".8" height=".8" fill="#1a5f22"/><rect x="123.6" y="54.3" width=".8" height=".8" fill="#2fae3a"/><rect x="127.6" y="66.8" width=".8" height=".8" fill="#3fd04a"/><rect x="147.9" y="53.6" width=".8" height=".8" fill="#3fd04a"/><rect x="148.3" y="64.9" width=".8" height=".8" fill="#1a5f22"/><rect x="141.9" y="67.3" width=".8" height=".8" fill="#1f7a2a"/><rect x="141.8" y="58.9" width=".8" height=".8" fill="#3fd04a"/><rect x="153.1" y="52.4" width=".8" height=".8" fill="#3fd04a"/><rect x="144.6" y="48.2" width=".8" height=".8" fill="#1a5f22"/><rect x="142.1" y="48.8" width=".8" height=".8" fill="#1f7a2a"/><rect x="137.9" y="54.1" width=".8" height=".8" fill="#3fd04a"/><rect x="135.4" y="63.2" width=".8" height=".8" fill="#2fae3a"/><rect x="153.0" y="45.5" width=".8" height=".8" fill="#2fae3a"/><rect x="142.3" y="60.9" width=".8" height=".8" fill="#2fae3a"/><rect x="152.1" y="69.1" width=".8" height=".8" fill="#3fd04a"/><rect x="130.9" y="53.6" width=".8" height=".8" fill="#1f7a2a"/><rect x="129.1" y="72.5" width=".8" height=".8" fill="#1a5f22"/><rect x="146.0" y="64.0" width=".8" height=".8" fill="#3fd04a"/><rect x="137.9" y="47.1" width=".8" height=".8" fill="#1a5f22"/><rect x="123.3" y="68.8" width=".8" height=".8" fill="#2fae3a"/><rect x="153.2" y="64.0" width=".8" height=".8" fill="#2fae3a"/><rect x="139.0" y="56.1" width=".8" height=".8" fill="#2fae3a"/><rect x="141.2" y="52.2" width=".8" height=".8" fill="#3fd04a"/><rect x="132.3" y="71.4" width=".8" height=".8" fill="#1a5f22"/><rect x="148.8" y="57.1" width=".8" height=".8" fill="#1f7a2a"/><rect x="122.9" y="50.2" width=".8" height=".8" fill="#2fae3a"/><rect x="129.3" y="44.1" width=".8" height=".8" fill="#1f7a2a"/><rect x="140.1" y="53.3" width=".8" height=".8" fill="#1f7a2a"/><rect x="139.7" y="62.5" width=".8" height=".8" fill="#3fd04a"/><rect x="149.1" y="43.4" width=".8" height=".8" fill="#2fae3a"/><rect x="152.7" y="41.9" width=".8" height=".8" fill="#1f7a2a"/><rect x="141.2" y="63.4" width=".8" height=".8" fill="#2fae3a"/><rect x="127.2" y="47.4" width=".8" height=".8" fill="#2fae3a"/><rect x="126.2" y="74.1" width=".8" height=".8" fill="#1a5f22"/><rect x="121.4" y="45.2" width=".8" height=".8" fill="#3fd04a"/><rect x="127.4" y="67.7" width=".8" height=".8" fill="#1a5f22"/><rect x="146.4" y="45.4" width=".8" height=".8" fill="#2fae3a"/><rect x="143.8" y="60.3" width=".8" height=".8" fill="#3fd04a"/><rect x="142.8" y="69.8" width=".8" height=".8" fill="#1f7a2a"/><rect x="135.3" y="44.7" width=".8" height=".8" fill="#3fd04a"/><rect x="123.0" y="57.8" width=".8" height=".8" fill="#1f7a2a"/><rect x="125.3" y="49.2" width=".8" height=".8" fill="#1a5f22"/><rect x="129.8" y="71.1" width=".8" height=".8" fill="#2fae3a"/><rect x="149.8" y="49.4" width=".8" height=".8" fill="#3fd04a"/><rect x="147.7" y="53.5" width=".8" height=".8" fill="#2fae3a"/><rect x="141.7" y="47.1" width=".8" height=".8" fill="#2fae3a"/><rect x="135.4" y="67.2" width=".8" height=".8" fill="#1f7a2a"/><rect x="149.6" y="70.1" width=".8" height=".8" fill="#1f7a2a"/><rect x="138.9" y="70.7" width=".8" height=".8" fill="#1f7a2a"/><rect x="139.0" y="55.8" width=".8" height=".8" fill="#2fae3a"/><rect x="130.3" y="56.3" width=".8" height=".8" fill="#1a5f22"/><rect x="128.4" y="55.2" width=".8" height=".8" fill="#1f7a2a"/><rect x="128.1" y="71.0" width=".8" height=".8" fill="#3fd04a"/><rect x="123.8" y="57.3" width=".8" height=".8" fill="#1a5f22"/><rect x="121.5" y="54.5" width=".8" height=".8" fill="#1f7a2a"/><rect x="138.6" y="70.4" width=".8" height=".8" fill="#1f7a2a"/><rect x="123.5" y="72.4" width=".8" height=".8" fill="#2fae3a"/><rect x="147.4" y="47.6" width=".8" height=".8" fill="#3fd04a"/><rect x="147.6" y="68.8" width=".8" height=".8" fill="#3fd04a"/><rect x="136.1" y="64.9" width=".8" height=".8" fill="#3fd04a"/><rect x="123.1" y="71.7" width=".8" height=".8" fill="#3fd04a"/><rect x="140.1" y="43.8" width=".8" height=".8" fill="#3fd04a"/><rect x="131.0" y="44.0" width=".8" height=".8" fill="#3fd04a"/><rect x="124.5" y="70.2" width=".8" height=".8" fill="#1a5f22"/><rect x="141.4" y="70.0" width=".8" height=".8" fill="#1a5f22"/><rect x="144.2" y="54.5" width=".8" height=".8" fill="#3fd04a"/><rect x="131.9" y="69.7" width=".8" height=".8" fill="#3fd04a"/><rect x="127.3" y="66.2" width=".8" height=".8" fill="#3fd04a"/><rect x="146.4" y="51.7" width=".8" height=".8" fill="#1a5f22"/><rect x="125.7" y="50.3" width=".8" height=".8" fill="#1f7a2a"/><rect x="136.8" y="58.6" width=".8" height=".8" fill="#2fae3a"/><rect x="133.4" y="73.5" width=".8" height=".8" fill="#3fd04a"/><rect x="143.1" y="48.2" width=".8" height=".8" fill="#1a5f22"/><rect x="135.9" y="63.6" width=".8" height=".8" fill="#3fd04a"/><rect x="146.8" y="68.6" width=".8" height=".8" fill="#1f7a2a"/><rect x="125.7" y="64.4" width=".8" height=".8" fill="#2fae3a"/><rect x="128.6" y="58.5" width=".8" height=".8" fill="#1a5f22"/><rect x="132.9" y="65.1" width=".8" height=".8" fill="#1a5f22"/><rect x="145.1" y="58.7" width=".8" height=".8" fill="#3fd04a"/><rect x="153.1" y="59.4" width=".8" height=".8" fill="#3fd04a"/><rect x="123.2" y="69.0" width=".8" height=".8" fill="#3fd04a"/><rect x="149.6" y="44.4" width=".8" height=".8" fill="#1a5f22"/><rect x="140.7" y="50.4" width=".8" height=".8" fill="#1a5f22"/><rect x="130.4" y="74.8" width=".8" height=".8" fill="#1a5f22"/><rect x="148.2" y="65.3" width=".8" height=".8" fill="#1a5f22"/><rect x="126.0" y="45.4" width=".8" height=".8" fill="#1a5f22"/><rect x="144.2" y="48.8" width=".8" height=".8" fill="#1a5f22"/><rect x="130.4" y="66.1" width=".8" height=".8" fill="#3fd04a"/><rect x="143.0" y="51.4" width=".8" height=".8" fill="#1f7a2a"/><rect x="140.1" y="48.0" width=".8" height=".8" fill="#2fae3a"/><rect x="122.0" y="55.4" width=".8" height=".8" fill="#1a5f22"/><rect x="140.8" y="54.2" width=".8" height=".8" fill="#1a5f22"/><rect x="146.5" y="46.9" width=".8" height=".8" fill="#2fae3a"/><rect x="133.0" y="70.5" width=".8" height=".8" fill="#1a5f22"/><rect x="124.1" y="47.7" width=".8" height=".8" fill="#1f7a2a"/><rect x="141.9" y="45.5" width=".8" height=".8" fill="#3fd04a"/><rect x="150.6" y="71.8" width=".8" height=".8" fill="#3fd04a"/><rect x="141.2" y="52.0" width=".8" height=".8" fill="#2fae3a"/><rect x="142.0" y="61.2" width=".8" height=".8" fill="#1a5f22"/><rect x="131.5" y="41.9" width=".8" height=".8" fill="#1a5f22"/><rect x="144.1" y="74.1" width=".8" height=".8" fill="#2fae3a"/><rect x="149.6" y="72.9" width=".8" height=".8" fill="#2fae3a"/><rect x="123.3" y="68.8" width=".8" height=".8" fill="#1a5f22"/><rect x="122.9" y="62.6" width=".8" height=".8" fill="#2fae3a"/><rect x="133.0" y="42.4" width=".8" height=".8" fill="#1a5f22"/><rect x="151.1" y="71.4" width=".8" height=".8" fill="#1f7a2a"/><rect x="142.6" y="50.0" width=".8" height=".8" fill="#1a5f22"/><rect x="145.6" y="44.9" width=".8" height=".8" fill="#2fae3a"/><rect x="149.2" y="50.0" width=".8" height=".8" fill="#2fae3a"/><rect x="128.8" y="52.5" width=".8" height=".8" fill="#1a5f22"/><rect x="146.6" y="43.3" width=".8" height=".8" fill="#1f7a2a"/><rect x="151.9" y="53.0" width=".8" height=".8" fill="#1a5f22"/><path d="M21.5 78.2 V121 H64.0 V78.2 Z" fill="none" stroke="#444" stroke-width=".5"/><rect x="24.7" y="103.5" width="5.6" height="17.5" fill="#a6dcc8"/><path d="M27.5 103.5 V101.3 M26.0 101.3 H29.0" stroke="#444" stroke-width=".4"/><rect x="34.6" y="101.5" width="5.6" height="19.5" fill="#f3ced2"/><path d="M37.4 101.5 V99.3 M35.9 99.3 H38.9" stroke="#444" stroke-width=".4"/><rect x="44.5" y="99" width="5.6" height="22.0" fill="#ec8c8f"/><path d="M47.3 99 V96.8 M45.8 96.8 H48.8" stroke="#444" stroke-width=".4"/><rect x="54.4" y="94" width="5.6" height="27.0" fill="#e25a5e"/><path d="M57.2 94 V91.8 M55.7 91.8 H58.7" stroke="#444" stroke-width=".4"/><path d="M28.5 81.2 H58.0 M37.5 84.2 H58.0" stroke="#222" stroke-width=".7"/><path d="M47.5 87.7 H58.0" stroke="#666" stroke-width=".5"/><path d="M20.3 121.0 H21.5" stroke="#333" stroke-width=".4"/><path d="M20.3 107.5 H21.5" stroke="#333" stroke-width=".4"/><path d="M20.3 94.0 H21.5" stroke="#333" stroke-width=".4"/><path d="M20.3 80.5 H21.5" stroke="#333" stroke-width=".4"/><path d="M78 78.2 V121 H119.5 V78.2 Z" fill="none" stroke="#444" stroke-width=".5"/><rect x="81.2" y="101.5" width="5.6" height="19.5" fill="#a6dcc8"/><path d="M84.0 101.5 V99.3 M82.5 99.3 H85.5" stroke="#444" stroke-width=".4"/><rect x="90.9" y="99.5" width="5.6" height="21.5" fill="#f3ced2"/><path d="M93.7 99.5 V97.3 M92.2 97.3 H95.2" stroke="#444" stroke-width=".4"/><rect x="100.5" y="95" width="5.6" height="26.0" fill="#ec8c8f"/><path d="M103.3 95 V92.8 M101.8 92.8 H104.8" stroke="#444" stroke-width=".4"/><rect x="110.2" y="93.5" width="5.6" height="27.5" fill="#e25a5e"/><path d="M113.0 93.5 V91.3 M111.5 91.3 H114.5" stroke="#444" stroke-width=".4"/><path d="M85 81.2 H113.5 M94 84.2 H113.5" stroke="#222" stroke-width=".7"/><path d="M104 87.7 H113.5" stroke="#666" stroke-width=".5"/><path d="M76.8 121.0 H78" stroke="#333" stroke-width=".4"/><path d="M76.8 107.5 H78" stroke="#333" stroke-width=".4"/><path d="M76.8 94.0 H78" stroke="#333" stroke-width=".4"/><path d="M76.8 80.5 H78" stroke="#333" stroke-width=".4"/><text transform="translate(16 115) rotate(-90)" font-size="3.2" fill="#333" font-family="Liberation Sans, sans-serif">Tube length (mm)</text><text transform="translate(72.5 113) rotate(-90)" font-size="3.2" fill="#333" font-family="Liberation Sans, sans-serif">Nodes number</text><rect x="128.5" y="87.2" width="4.5" height="1.7" fill="#a6dcc8"/><text x="135" y="89.2" font-size="3.3" fill="#444" font-family="Liberation Sans, Noto Sans CJK SC, sans-serif">对照组</text><rect x="128.5" y="95.6" width="4.5" height="1.7" fill="#f3ced2"/><text x="135" y="97.6" font-size="3.3" fill="#444" font-family="Liberation Sans, Noto Sans CJK SC, sans-serif">50 μg/mL</text><rect x="128.5" y="104.0" width="4.5" height="1.7" fill="#ec8c8f"/><text x="135" y="106.0" font-size="3.3" fill="#444" font-family="Liberation Sans, Noto Sans CJK SC, sans-serif">100 μg/mL</text><rect x="128.5" y="112.4" width="4.5" height="1.7" fill="#e25a5e"/><text x="135" y="114.4" font-size="3.3" fill="#444" font-family="Liberation Sans, Noto Sans CJK SC, sans-serif">200 μg/mL</text></svg></div>
  <div class="lb" style="left:573px;top:758px">申请人：</div>
  <div class="abs" style="left:625px;top:758px;font-size:13px;line-height:20px;color:#12b5be">四川大学</div>
  <div class="lb" style="left:586px;top:785.7px">摘要：</div>
  <div class="al" style="top:785.7px">本发明公开了一种生物活性多肽水凝胶及其制备方法和应用，属于生物医学技术领域。本发明合成一种抗氧化肽<u>MMP12</u>用于对<u>MI</u>区域的ROS清除作用，从而保护心肌细胞；一种促血管生成肽KRX，用</div>
  <div class="al" style="top:805px">于治疗心梗时的心肌缺血。实验结果表明，本发明制备的生物活性多肽水凝胶除了具有抗氧化和促血管生成的功能之外，两个多肽的联用还起到了明显的抗凋亡、抗炎以及抑制心肌纤维化的效果，这些</div>

  <div class="abs" style="left:1814px;top:465px;width:40px;height:130px;border-radius:6px;background:#fff;box-shadow:0 0 8px rgba(0,0,0,.12)"></div>
  <div class="abs" style="left:1823px;top:507px;width:30px;height:1px;background:#e4e7ed"></div>
  <div class="abs" style="left:1823px;top:550px;width:30px;height:1px;background:#e4e7ed"></div>
  <svg class="abs" style="left:1826px;top:476px" width="24" height="20" viewBox="0 0 24 20"><rect x=".5" y=".5" width="14" height="10" rx="2" fill="#5fb9bf"/><rect x="5.5" y="4.5" width="18" height="11" rx="2" fill="#12b5be"/><path d="M16 15 L19.5 19 L19.5 15 Z" fill="#12b5be"/><circle cx="10.5" cy="10" r="1.1" fill="#fff"/><circle cx="14.5" cy="10" r="1.1" fill="#fff"/><circle cx="18.5" cy="10" r="1.1" fill="#fff"/></svg>
  <svg class="abs" style="left:1826px;top:517px" width="24" height="24" viewBox="0 0 24 24"><path d="M3.2 2.2 C1.4 3.6 1 6.5 3.4 11.2 C6 16.4 10.4 20.6 14.6 21.8 C17.4 22.6 19.4 21.4 20.8 18.8 L16.4 14.6 L13.4 16.4 C10.8 15 8.6 12 7.4 9.2 L9.8 7 L6.6 1.6 Z" fill="#12b5be"/><ellipse cx="18" cy="4.6" rx="4.2" ry="3.6" fill="#2a6fd0"/><path d="M14.6 6 L13.6 9 L17 7.6 Z" fill="#2a6fd0"/></svg>
  <svg class="abs" style="left:1827px;top:562px" width="22" height="19" viewBox="0 0 22 19"><ellipse cx="7.6" cy="6.8" rx="7.4" ry="6.4" fill="#2a6fd0"/><path d="M3.4 11.4 L2.6 14.6 L6.4 12.8 Z" fill="#2a6fd0"/><ellipse cx="15" cy="12" rx="6.2" ry="5.4" fill="#12b5be" stroke="#fff" stroke-width=".6"/><path d="M18 16.4 L19.6 18.6 L16 17.2 Z" fill="#12b5be"/><circle cx="5" cy="5.6" r="1" fill="#fff"/><circle cx="10" cy="5.6" r="1" fill="#fff"/><circle cx="13" cy="11" r=".9" fill="#fff"/><circle cx="17" cy="11" r=".9" fill="#fff"/></svg>
  <div class="abs" style="left:1801px;top:520px;width:13px;height:20px;border-radius:4px 0 0 4px;background:#ececec"></div>
  <svg class="abs" style="left:1803px;top:524px" width="9" height="12" viewBox="0 0 9 12"><path d="M1.6 1.2 L6.8 6 L1.6 10.8" fill="none" stroke="#8a8f99" stroke-width="1.8"/></svg>
</div>
</div>
<div id="ov"></div>
<div id="md">
  <div class="abs" style="left:20px;top:22px;font-size:14px;font-weight:bold;line-height:20px;color:#303133">导出数据</div>
  <div class="abs" style="left:915px;top:17px;width:25px;height:25px;border-radius:4px;background:#f5f5f5"></div>
  <svg class="abs" style="left:922.5px;top:24.5px" width="10" height="10" viewBox="0 0 10 10"><path d="M1 1 L9 9 M9 1 L1 9" stroke="#606266" stroke-width="1"/></svg>
  <div class="abs" style="left:0;top:57px;width:960px;height:1px;background:#ebeef5"></div>
  <div class="mt" style="left:20px;top:79px">选择导出范围</div>
  <div class="abs" style="left:123px;top:83.5px;width:12px;height:12px;border-radius:50%;border:4px solid #12b5be;background:#fff"></div>
  <div class="mt" style="left:143px;top:79px">所有专利</div>
  <svg class="abs" style="left:200px;top:83px" width="14" height="14" viewBox="0 0 14 14"><circle cx="7" cy="7" r="6.6" fill="#f0a674"/><path d="M5.6 6 H7.8 V10.6 M5.4 10.8 H9" fill="none" stroke="#fff" stroke-width="1.5"/><circle cx="7" cy="3.6" r="1.1" fill="#fff"/></svg>
  <div class="abs" style="left:242px;top:83.5px;width:12px;height:12px;border-radius:50%;border:1px solid #dcdfe6;background:#fff"></div>
  <div class="mt" style="left:261px;top:79px">当前页选中专利</div>
  <div class="pn" style="left:20px;width:654px"><div class="hd"></div>
    <div class="cb" style="left:14px;top:13px"></div><div class="mt" style="left:35px;top:10px">可选字段</div>
    <div class="mt" style="right:14px;top:10px;font-size:12px;color:#909399">7</div>
    <div class="cb" style="left:14px;top:56px"></div><div class="mt" style="left:35px;top:53px">法律状态<span class="sl">/</span>事件</div>
    <div class="cb" style="left:221px;top:56px"></div><div class="mt" style="left:242px;top:53px">申请号</div>
    <div class="cb" style="left:428px;top:56px"></div><div class="mt" style="left:449px;top:53px">申请日</div>
    <div class="cb" style="left:14px;top:88px"></div><div class="mt" style="left:35px;top:85px">发明(设计)人</div>
    <div class="cb" style="left:221px;top:88px"></div><div class="mt" style="left:242px;top:85px">IPC分类号</div>
    <div class="cb" style="left:428px;top:88px"></div><div class="mt" style="left:449px;top:85px">LOC分类号</div>
    <div class="cb" style="left:14px;top:121px"></div><div class="mt" style="left:35px;top:118px">专利独权</div>
  </div>
  <div class="pn" style="left:694px;width:245px"><div class="hd"></div>
    <div class="ck" style="left:14px;top:13px"></div><div class="mt" style="left:35px;top:10px">已选字段</div>
    <div class="mt" style="right:14px;top:10px;font-size:12px;color:#909399">9</div>
    <div class="ck" style="left:14px;top:56px"></div><div class="mt" style="left:35px;top:53px">公开(公告)号</div>
    <div class="ck" style="left:14px;top:88px"></div><div class="mt" style="left:35px;top:85px">标题</div>
    <div class="ck" style="left:14px;top:120px"></div><div class="mt" style="left:35px;top:117px">简单法律状态</div>
    <div class="ck" style="left:14px;top:152px"></div><div class="mt" style="left:35px;top:149px">专利类型</div>
    <div class="ck" style="left:14px;top:184px"></div><div class="mt" style="left:35px;top:181px">申请人</div>
    <div class="ck" style="left:14px;top:216px"></div><div class="mt" style="left:35px;top:213px">专利权人</div>
    <div class="ck" style="left:14px;top:248px"></div><div class="mt" style="left:35px;top:245px">公开(公告)日</div>
    <div class="abs" style="left:236.5px;top:54px;width:6px;height:130px;border-radius:3px;background:#c3d0cf"></div>
  </div>
  <div class="abs" style="left:11px;top:111px;width:594px;height:154px;border:2px solid #e8391d;border-radius:7px"></div>
  <div class="abs" style="left:685px;top:100px;width:171px;height:268px;border:2px solid #e8391d;border-radius:7px"></div>
  <svg class="abs" style="left:27.3px;top:239.5px" width="22" height="84" viewBox="0 0 22 84"><path d="M9 13 L13 13 L12.5 79 A1.5 1.5 0 0 1 9.5 79 Z" fill="#e8391d"/><path d="M11 1.3 L19.6 17.6 L11 13.8 L2.4 17.6 Z" fill="#e8391d"/></svg>
  <div class="abs" style="left:53.8px;top:301.6px;font-size:21px;line-height:32px;color:#e8391d;letter-spacing:.02px;font-weight:300">这里可以选择已选字段外想勾选的其他所需字段</div>
  <div class="cb" style="left:20px;top:378px"></div><div class="mt" style="left:41px;top:375px">包含原文</div>
  <svg class="abs" style="left:98px;top:378px" width="14" height="14" viewBox="0 0 14 14"><circle cx="7" cy="7" r="6.6" fill="#f0a674"/><path d="M5.6 6 H7.8 V10.6 M5.4 10.8 H9" fill="none" stroke="#fff" stroke-width="1.5"/><circle cx="7" cy="3.6" r="1.1" fill="#fff"/></svg>
  <div class="nt" style="top:405px;width:920px;white-space:normal;text-align:left">导出说明：请通过页面顶部导航的<b>工具箱</b>进入 <b style="margin-right:2.5px">“导出管理”</b> 中下载文件，有效期为<b>一周</b>。部分导出文件处理时间较长，请耐心等待。导出的过程中，您仍可以浏览数据库。</div>
  <div class="nt" style="top:439.4px">单次导出限制：<b>500条<span class="sl">/</span>次</b>，包含原文<span class="sl">/</span>摘要附图时<b>100条<span class="sl">/</span>次</b></div>
  <div class="nt" style="top:460.4px">每日导出限制：<b>10000条<span class="sl">/</span>日</b>，包含PDF原文<b>1000条<span class="sl">/</span>日</b></div>
  <div class="nt" style="top:481.4px">今日已导数据：共计<b>0条</b>，包含PDF原文<b>0条</b></div>
  <div class="abs" style="left:755px;top:517px;width:80px;height:30px;border:1px solid #e4e7ed;border-radius:3px;background:#f5f7fa;color:#c0c4cc;font-size:13px;line-height:29px;text-align:center">重置</div>
  <div class="abs" style="left:860px;top:517px;width:80px;height:30px;border-radius:3px;background:#12b5be;color:#fff;font-size:13px;font-weight:500;line-height:31px;text-align:center">导出</div>
</div>
<div class="abs" style="left:1827px;top:206px;width:60px;height:38px;border-radius:19px;background:#fff;z-index:7;box-shadow:0 0 10px rgba(0,0,0,.15)"></div>
<div class="abs" style="left:1839px;top:214px;width:21px;height:21px;border-radius:50%;background:#5b62f0;z-index:8;color:#fff;font-size:10px;font-weight:bold;line-height:23px;padding-left:3.5px;overflow:hidden">译</div>

</body>
</html>
